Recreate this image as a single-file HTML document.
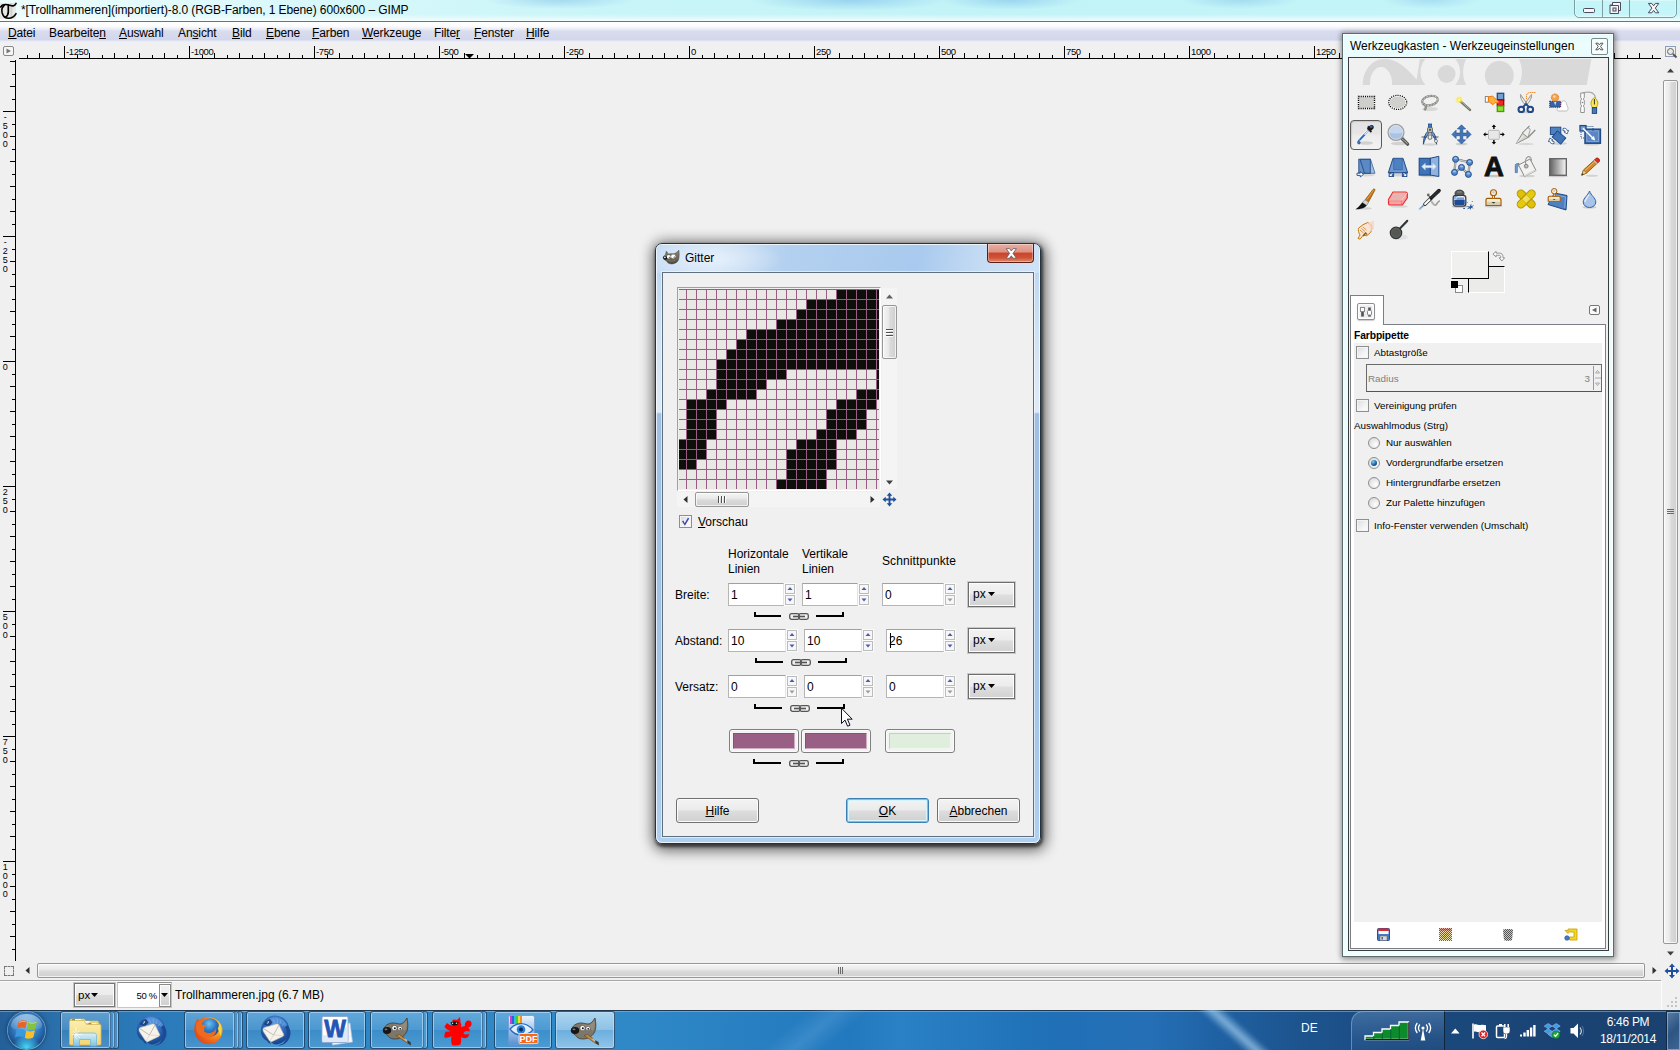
<!DOCTYPE html>
<html lang="de"><head><meta charset="utf-8"><title>GIMP</title>
<style>
html,body{margin:0;padding:0}
body{width:1680px;height:1050px;overflow:hidden;background:#f0f0f0;font-family:"Liberation Sans",sans-serif;font-size:12px;color:#000;position:relative;line-height:14px}
.a{position:absolute}
.t{position:absolute;white-space:nowrap}
u{text-decoration:underline;text-underline-offset:1px}
svg{position:absolute;overflow:visible}
/* title bar */
#title{left:0;top:0;width:1680px;height:21px;background:
 radial-gradient(ellipse 75px 9px at 560px 0px,rgba(125,190,232,.5),rgba(125,190,232,0) 100%),
 radial-gradient(ellipse 100px 11px at 850px 0px,rgba(115,185,232,.55),rgba(115,185,232,0) 100%),
 radial-gradient(ellipse 70px 10px at 1010px 0px,rgba(115,185,232,.5),rgba(115,185,232,0) 100%),
 radial-gradient(ellipse 60px 9px at 1240px 0px,rgba(125,190,232,.45),rgba(125,190,232,0) 100%),
 radial-gradient(ellipse 50px 9px at 1430px 0px,rgba(125,190,232,.4),rgba(125,190,232,0) 100%),
 linear-gradient(90deg,#ecfcfd 0,#dcf8fb 250px,#c9f5f8 600px,#c2f3f7 1000px,#c4f5f9 1680px)}
#title::after{content:"";position:absolute;left:0;right:0;bottom:0;height:7px;background:linear-gradient(180deg,rgba(255,255,255,0),rgba(255,255,255,.75))}
#tline{left:0;top:21px;width:1680px;height:1px;background:#5f7787}
#menu{left:0;top:22px;width:1680px;height:21px;background:linear-gradient(180deg,#fff 0,#fdfdfe 4px,#e4e6f3 8px,#d9dcee 9px,#d3d7eb 18px,#e9ebf5 19px,#f1f2f8 21px)}
#menu span{position:absolute;top:4px;white-space:nowrap;letter-spacing:-.12px}
</style></head><body>
<div class="a" id="title"></div>
<div class="a" style="left:0;top:3px;width:16px;height:16px;background:linear-gradient(90deg,#e6e6e4 0,#e9e9e7 62%,#cfcfcd 68%,#d2d2d0 74%,#e8e8e6 80%,#eaeae8 100%)"></div>
<svg style="left:0;top:3px" width="17" height="17" viewBox="0 0 17 17"><g fill="none" stroke="#000" stroke-linecap="round" transform="translate(.4,0)">
<path d="M4 2.200c-2.300 1.800-3 4.500-2.300 7.500 1 3.700 4 5.800 7.300 5.600 3-.2 5.200-2 6.600-4.600" stroke-width="1.600"/>
<path d="M0.300 3.900c.8-1.600 2.500-2.300 4.500-2.400 3.500-.2 5.500 1.600 8 1.300 1.500-.2 2.300-1.200 2.800-2.300" stroke-width="1.700"/>
<path d="M7.900 2v7c0 2.500-1 4-2.800 5.200" stroke-width="1.700"/>
<path d="M1 2.800l.8-.6M2.500 4.500l1-1" stroke-width=".9"/></g></svg>
<div class="t" id="ttext" style="left:21px;top:3px;font-size:12px;letter-spacing:-0.1px">*[Trollhammeren](importiert)-8.0 (RGB-Farben, 1 Ebene) 600x600 – GIMP</div>
<div class="a" id="tline"></div>
<div class="a" id="menu">
<span style="left:8px"><u>D</u>atei</span><span style="left:49px">Bearbeite<u>n</u></span><span style="left:119px"><u>A</u>uswahl</span><span style="left:178px">An<u>s</u>icht</span><span style="left:232px"><u>B</u>ild</span><span style="left:266px"><u>E</u>bene</span><span style="left:312px"><u>F</u>arben</span><span style="left:362px"><u>W</u>erkzeuge</span><span style="left:434px">Filte<u>r</u></span><span style="left:474px"><u>F</u>enster</span><span style="left:526px"><u>H</u>ilfe</span>
</div>
<div class="a" style="left:1574px;top:-1px;width:103px;height:19px;box-sizing:border-box;border:1px solid #7b9fa3;border-radius:0 0 5px 5px;box-shadow:inset 0 0 0 1px rgba(255,255,255,.35)"></div>
<div class="a" style="left:1602px;top:0;width:1px;height:17px;background:#7b9fa3"></div>
<div class="a" style="left:1629px;top:0;width:1px;height:17px;background:#7b9fa3"></div>
<svg style="left:1574px;top:0" width="103" height="18"><g fill="#f6f6f6" stroke="#4b4b5c" stroke-width="1">
<rect x="9.500" y="8.500" width="11" height="4" rx="1"/>
<path d="M38.500 2.500h8v8h-2v3h-8.500v-8.500h2.500z"/><rect x="39" y="8" width="3" height="3" fill="#cfeff2"/>
<path d="M74.40 3.40h3.40L79.60 5.82L81.40 3.40h3.40L81.30 8.10L84.80 12.80h-3.40L79.60 10.38L77.80 12.80h-3.40L77.90 8.10z"/></g>
<path d="M36.500 5.500h8v7.500" fill="none" stroke="#4b4b5c"/></svg>
<style>.rl{font-size:9px;line-height:10px;letter-spacing:-0.3px}</style>
<svg class="a" style="left:0;top:0" width="1680" height="1050" shape-rendering="crispEdges">
<rect x="19" y="58" width="1642" height="1" fill="#000"/>
<path d="M27 55h1v3h-1zM39 53h1v5h-1zM52 55h1v3h-1zM64 46h1v12h-1zM77 55h1v3h-1zM89 53h1v5h-1zM102 55h1v3h-1zM114 53h1v5h-1zM127 55h1v3h-1zM139 53h1v5h-1zM152 55h1v3h-1zM164 53h1v5h-1zM177 55h1v3h-1zM189 46h1v12h-1zM202 55h1v3h-1zM214 53h1v5h-1zM227 55h1v3h-1zM239 53h1v5h-1zM252 55h1v3h-1zM264 53h1v5h-1zM277 55h1v3h-1zM289 53h1v5h-1zM302 55h1v3h-1zM314 46h1v12h-1zM327 55h1v3h-1zM339 53h1v5h-1zM352 55h1v3h-1zM364 53h1v5h-1zM377 55h1v3h-1zM389 53h1v5h-1zM402 55h1v3h-1zM414 53h1v5h-1zM427 55h1v3h-1zM439 46h1v12h-1zM452 55h1v3h-1zM464 53h1v5h-1zM477 55h1v3h-1zM489 53h1v5h-1zM502 55h1v3h-1zM514 53h1v5h-1zM527 55h1v3h-1zM539 53h1v5h-1zM552 55h1v3h-1zM564 46h1v12h-1zM577 55h1v3h-1zM589 53h1v5h-1zM602 55h1v3h-1zM614 53h1v5h-1zM627 55h1v3h-1zM639 53h1v5h-1zM652 55h1v3h-1zM664 53h1v5h-1zM677 55h1v3h-1zM689 46h1v12h-1zM702 55h1v3h-1zM714 53h1v5h-1zM727 55h1v3h-1zM739 53h1v5h-1zM752 55h1v3h-1zM764 53h1v5h-1zM777 55h1v3h-1zM789 53h1v5h-1zM802 55h1v3h-1zM814 46h1v12h-1zM827 55h1v3h-1zM839 53h1v5h-1zM852 55h1v3h-1zM864 53h1v5h-1zM877 55h1v3h-1zM889 53h1v5h-1zM902 55h1v3h-1zM914 53h1v5h-1zM927 55h1v3h-1zM939 46h1v12h-1zM952 55h1v3h-1zM964 53h1v5h-1zM977 55h1v3h-1zM989 53h1v5h-1zM1002 55h1v3h-1zM1014 53h1v5h-1zM1027 55h1v3h-1zM1039 53h1v5h-1zM1052 55h1v3h-1zM1064 46h1v12h-1zM1077 55h1v3h-1zM1089 53h1v5h-1zM1102 55h1v3h-1zM1114 53h1v5h-1zM1127 55h1v3h-1zM1139 53h1v5h-1zM1152 55h1v3h-1zM1164 53h1v5h-1zM1177 55h1v3h-1zM1189 46h1v12h-1zM1202 55h1v3h-1zM1214 53h1v5h-1zM1227 55h1v3h-1zM1239 53h1v5h-1zM1252 55h1v3h-1zM1264 53h1v5h-1zM1277 55h1v3h-1zM1289 53h1v5h-1zM1302 55h1v3h-1zM1314 46h1v12h-1zM1327 55h1v3h-1zM1339 53h1v5h-1zM1352 55h1v3h-1zM1364 53h1v5h-1zM1377 55h1v3h-1zM1389 53h1v5h-1zM1402 55h1v3h-1zM1414 53h1v5h-1zM1427 55h1v3h-1zM1439 46h1v12h-1zM1452 55h1v3h-1zM1464 53h1v5h-1zM1477 55h1v3h-1zM1489 53h1v5h-1zM1502 55h1v3h-1zM1514 53h1v5h-1zM1527 55h1v3h-1zM1539 53h1v5h-1zM1552 55h1v3h-1zM1564 46h1v12h-1zM1577 55h1v3h-1zM1589 53h1v5h-1zM1602 55h1v3h-1zM1614 53h1v5h-1zM1627 55h1v3h-1zM1639 53h1v5h-1zM1652 55h1v3h-1z" fill="#000"/>
<path d="M465 54h9l-4.5 4.5z" fill="#000" shape-rendering="auto"/>
<rect x="15" y="60" width="1" height="901" fill="#000"/>
<path d="M10 61h5v1h-5zM12 74h3v1h-3zM10 86h5v1h-5zM12 99h3v1h-3zM3 111h12v1h-12zM12 124h3v1h-3zM10 136h5v1h-5zM12 149h3v1h-3zM10 161h5v1h-5zM12 174h3v1h-3zM10 186h5v1h-5zM12 199h3v1h-3zM10 211h5v1h-5zM12 224h3v1h-3zM3 236h12v1h-12zM12 249h3v1h-3zM10 261h5v1h-5zM12 274h3v1h-3zM10 286h5v1h-5zM12 299h3v1h-3zM10 311h5v1h-5zM12 324h3v1h-3zM10 336h5v1h-5zM12 349h3v1h-3zM3 361h12v1h-12zM12 374h3v1h-3zM10 386h5v1h-5zM12 399h3v1h-3zM10 411h5v1h-5zM12 424h3v1h-3zM10 436h5v1h-5zM12 449h3v1h-3zM10 461h5v1h-5zM12 474h3v1h-3zM3 486h12v1h-12zM12 499h3v1h-3zM10 511h5v1h-5zM12 524h3v1h-3zM10 536h5v1h-5zM12 549h3v1h-3zM10 561h5v1h-5zM12 574h3v1h-3zM10 586h5v1h-5zM12 599h3v1h-3zM3 611h12v1h-12zM12 624h3v1h-3zM10 636h5v1h-5zM12 649h3v1h-3zM10 661h5v1h-5zM12 674h3v1h-3zM10 686h5v1h-5zM12 699h3v1h-3zM10 711h5v1h-5zM12 724h3v1h-3zM3 736h12v1h-12zM12 749h3v1h-3zM10 761h5v1h-5zM12 774h3v1h-3zM10 786h5v1h-5zM12 799h3v1h-3zM10 811h5v1h-5zM12 824h3v1h-3zM10 836h5v1h-5zM12 849h3v1h-3zM3 861h12v1h-12zM12 874h3v1h-3zM10 886h5v1h-5zM12 899h3v1h-3zM10 911h5v1h-5zM12 924h3v1h-3zM10 936h5v1h-5zM12 949h3v1h-3z" fill="#000"/>
</svg>
<div class="t rl" style="left:66px;top:46.500px;font-size:9.500px;letter-spacing:-.4px">-1250</div>
<div class="t rl" style="left:191px;top:46.500px;font-size:9.500px;letter-spacing:-.4px">-1000</div>
<div class="t rl" style="left:316px;top:46.500px;font-size:9.500px;letter-spacing:-.4px">-750</div>
<div class="t rl" style="left:441px;top:46.500px;font-size:9.500px;letter-spacing:-.4px">-500</div>
<div class="t rl" style="left:566px;top:46.500px;font-size:9.500px;letter-spacing:-.4px">-250</div>
<div class="t rl" style="left:691px;top:46.500px;font-size:9.500px;letter-spacing:-.4px">0</div>
<div class="t rl" style="left:816px;top:46.500px;font-size:9.500px;letter-spacing:-.4px">250</div>
<div class="t rl" style="left:941px;top:46.500px;font-size:9.500px;letter-spacing:-.4px">500</div>
<div class="t rl" style="left:1066px;top:46.500px;font-size:9.500px;letter-spacing:-.4px">750</div>
<div class="t rl" style="left:1191px;top:46.500px;font-size:9.500px;letter-spacing:-.4px">1000</div>
<div class="t rl" style="left:1316px;top:46.500px;font-size:9.500px;letter-spacing:-.4px">1250</div>
<div class="t rl" style="left:1px;width:8px;text-align:center;top:112px">-</div>
<div class="t rl" style="left:1px;width:8px;text-align:center;top:121px">5</div>
<div class="t rl" style="left:1px;width:8px;text-align:center;top:130px">0</div>
<div class="t rl" style="left:1px;width:8px;text-align:center;top:139px">0</div>
<div class="t rl" style="left:1px;width:8px;text-align:center;top:237px">-</div>
<div class="t rl" style="left:1px;width:8px;text-align:center;top:246px">2</div>
<div class="t rl" style="left:1px;width:8px;text-align:center;top:255px">5</div>
<div class="t rl" style="left:1px;width:8px;text-align:center;top:264px">0</div>
<div class="t rl" style="left:1px;width:8px;text-align:center;top:362px">0</div>
<div class="t rl" style="left:1px;width:8px;text-align:center;top:487px">2</div>
<div class="t rl" style="left:1px;width:8px;text-align:center;top:496px">5</div>
<div class="t rl" style="left:1px;width:8px;text-align:center;top:505px">0</div>
<div class="t rl" style="left:1px;width:8px;text-align:center;top:612px">5</div>
<div class="t rl" style="left:1px;width:8px;text-align:center;top:621px">0</div>
<div class="t rl" style="left:1px;width:8px;text-align:center;top:630px">0</div>
<div class="t rl" style="left:1px;width:8px;text-align:center;top:737px">7</div>
<div class="t rl" style="left:1px;width:8px;text-align:center;top:746px">5</div>
<div class="t rl" style="left:1px;width:8px;text-align:center;top:755px">0</div>
<div class="t rl" style="left:1px;width:8px;text-align:center;top:862px">1</div>
<div class="t rl" style="left:1px;width:8px;text-align:center;top:871px">0</div>
<div class="t rl" style="left:1px;width:8px;text-align:center;top:880px">0</div>
<div class="t rl" style="left:1px;width:8px;text-align:center;top:889px">0</div>
<style>
.thumb{position:absolute;border:1px solid #979797;border-radius:2px;box-sizing:border-box}
.thh{background:linear-gradient(180deg,#f5f5f5 0,#eaeaea 40%,#dadada 55%,#cfcfcf 100%);box-shadow:inset 0 0 0 1px rgba(255,255,255,.7)}
.thv{background:linear-gradient(90deg,#f5f5f5 0,#eaeaea 40%,#dadada 55%,#cfcfcf 100%);box-shadow:inset 0 0 0 1px rgba(255,255,255,.7)}
.gbtn{position:absolute;box-sizing:border-box;border:1px solid #8e8f8f;box-shadow:inset 0 0 0 1px #fcfcfc;background:linear-gradient(180deg,#f2f2f2 0,#ebebeb 48%,#dddddd 52%,#cfcfcf 100%)}
</style>
<!-- vertical scrollbar -->
<div class="a" style="left:1663px;top:61px;width:15px;height:900px;background:#efefef"></div>
<div class="thumb thv" style="left:1663px;top:80px;width:15px;height:864px"></div>
<svg style="left:1663px;top:61px" width="15" height="900"><path d="M4 11.5l3.5-4 3.5 4z" fill="#404040"/><path d="M4 890.5l3.5 4 3.5-4z" fill="#404040"/>
<path d="M4 448.5h7M4 450.5h7M4 452.5h7" stroke="#6a6a6a" stroke-width="1" transform="translate(0,0)"/></svg>
<!-- horizontal scrollbar -->
<div class="a" style="left:19px;top:963px;width:1642px;height:15px;background:#efefef"></div>
<div class="thumb thh" style="left:37px;top:963px;width:1608px;height:15px"></div>
<svg style="left:19px;top:963px" width="1642" height="15"><path d="M10.5 4l-4 3.5 4 3.5z" fill="#303030"/><path d="M1633.5 4l4 3.5-4 3.5z" fill="#303030"/>
<path d="M819.5 4v7M821.5 4v7M823.5 4v7" stroke="#6a6a6a" stroke-width="1"/></svg>
<!-- quick mask -->
<div class="a" style="left:4px;top:966px;width:8px;height:8px;border:1px dashed #777"></div>
<!-- nav icon bottom right -->
<svg style="left:1664px;top:963px" width="16" height="16" viewBox="0 0 16 16"><path d="M8 0.5l3 3.5h-2v3h3v-2l3.5 3-3.5 3v-2h-3v3h2l-3 3.5-3-3.500h2v-3h-3v2l-3.500-3 3.500-3v2h3v-3h-2z" fill="#1f4f9c"/></svg>
<!-- zoom icon top right -->
<svg style="left:1665px;top:46px" width="13" height="13" viewBox="0 0 13 13"><rect x="0.500" y="0.500" width="10" height="10" fill="none" stroke="#2a4a8a" stroke-dasharray="1 1"/><circle cx="5.500" cy="5.500" r="3" fill="#e8e8e8" stroke="#666"/><path d="M8 8l3.500 3.500" stroke="#555" stroke-width="2"/></svg>
<!-- top-left ruler button -->
<div class="a" style="left:3px;top:46px;width:9px;height:8px;border:1px solid #888;border-radius:2px;background:#f6f6f6"></div>
<svg style="left:3px;top:46px" width="11" height="10"><path d="M3.500 2.500l4.500 2.500-4.500 2.500z" fill="#777"/></svg>
<!-- status bar -->
<div class="a" style="left:0;top:980px;width:1661px;height:1px;background:#a5a5a5"></div>
<div class="a" style="left:0;top:981px;width:1661px;height:1px;background:#fbfbfb"></div>
<div class="a" style="left:1661px;top:981px;width:1px;height:29px;background:#fbfbfb"></div>
<div class="gbtn" style="left:74px;top:983px;width:41px;height:24px;border-color:#757575;box-shadow:0 0 0 1px #c6c6c6,inset 0 0 0 1px #fcfcfc"></div>
<div class="t" style="left:78px;top:988px;font-size:11.500px">px</div>
<svg style="left:91px;top:993px" width="8" height="5"><path d="M0 0h7l-3.500 4z" fill="#000"/></svg>
<div class="a" style="left:117px;top:982px;width:55px;height:26px;box-sizing:border-box;border:1px solid #c6c6c6;border-top:1px solid #8e8e8e;background:#fff"></div>
<div class="gbtn" style="left:159px;top:984px;width:12px;height:23px;border-color:#8a8a8a"></div>
<svg style="left:161px;top:993px" width="8" height="5"><path d="M0 0h7l-3.500 4z" fill="#000"/></svg>
<div class="t" style="left:117px;width:40px;text-align:right;top:989px;font-size:9.500px;letter-spacing:-.3px">50 %</div>
<div class="t" style="left:175px;top:988px">Trollhammeren.jpg (6.7 MB)</div>
<!-- resize grip -->
<svg style="left:1667px;top:997px" width="12" height="12"><g fill="#c4c4c4"><rect x="8" y="0" width="2" height="2"/><rect x="4" y="4" width="2" height="2"/><rect x="8" y="4" width="2" height="2"/><rect x="0" y="8" width="2" height="2"/><rect x="4" y="8" width="2" height="2"/><rect x="8" y="8" width="2" height="2"/></g></svg>
<style>
#dlg{left:655px;top:243px;width:386px;height:601px;box-sizing:border-box;border:1px solid #27323f;border-radius:7px;
 box-shadow:0 0 0 0 #000,1px 2px 3px 1px rgba(0,0,0,.55),2px 4px 14px 3px rgba(0,0,0,.45),0 0 14px 2px rgba(0,0,0,.25);
 background:linear-gradient(180deg,#b4d1f0 0,#bfd8f2 30px,#d2e3f5 100px,#deeaf8 168px,#9fc0e4 170px,#a2c4e8 450px,#b0d0f2 600px)}
#dlg::before{content:"";position:absolute;left:0;top:0;right:0;bottom:0;border-radius:6px;box-shadow:inset 0 0 0 1px rgba(255,255,255,.75)}
#dtitle{left:1px;top:1px;width:382px;height:28px;border-radius:6px 6px 0 0;background:
 radial-gradient(ellipse 70px 22px at 55px 14px,rgba(232,242,252,.9),rgba(232,242,252,0) 100%),
 linear-gradient(100deg,#c6dcf3 0,#cfe1f5 60px,#b3d0ef 130px,#a9caee 260px,#c8ddf4 330px,#d0e2f6 384px)}
#dcl{left:6px;top:28px;width:372px;height:565px;box-sizing:border-box;border:1px solid #5e6f80;background:#f0f0f0;box-shadow:0 0 0 1px rgba(255,255,255,.55)}
#dx{left:331px;top:0px;width:47px;height:19px;box-sizing:border-box;border:1px solid #5a1f18;border-top:none;border-radius:0 0 4px 4px;box-shadow:inset 0 0 0 1px rgba(255,255,255,.35);
 background:linear-gradient(180deg,#e9aea2 0,#dd9284 45%,#c9442c 50%,#cf5236 75%,#e08a6a 100%)}
</style>
<div class="a" id="dlg">
<div class="a" id="dtitle"></div>
<div class="a" id="dx"></div>
<svg style="left:349px;top:4px" width="12" height="10" viewBox="0 0 12 10"><path d="M1.20 0.60h3.40L6.30 3.00L8.00 0.60h3.40L8.00 5.40L11.40 10.20h-3.40L6.30 7.80L4.60 10.20h-3.40L4.60 5.40z" fill="#fff" stroke="#5a5a66" stroke-width=".8"/></svg>
<svg style="left:7px;top:6px" width="17" height="15" viewBox="0 0 17 15"><defs><linearGradient id="wh" x1="0" y1="0" x2="0" y2="1"><stop offset="0" stop-color="#8a857a"/><stop offset=".6" stop-color="#6d675b"/><stop offset="1" stop-color="#4a463e"/></linearGradient></defs>
<path d="M3.300 1.300c.8 1 1.500 2.200 2.500 2.800 1.500-.5 3.500-.6 5.200-.3 1.800-.6 3.500-2 4.800-3.600.5 3 .5 6.500-.3 9.500-.8 2.500-3.500 4-6.500 4.200-3 .1-5-1.200-5.700-3.300-1.500-.3-2.800-1.300-3-2.800-.1-1.400.8-2.500 2.300-2.900.2-1.300.3-2.500.7-3.600z" fill="url(#wh)" stroke="#3a362f" stroke-width=".5"/>
<ellipse cx="2.300" cy="7.800" rx="2.100" ry="1.900" fill="#151515"/><ellipse cx="1.900" cy="7.400" rx=".9" ry=".8" fill="#e8e8e8"/>
<ellipse cx="5.700" cy="6.700" rx="1.900" ry="1.700" fill="#fff"/><ellipse cx="10.300" cy="6.500" rx="2.200" ry="1.900" fill="#fff"/>
<path d="M5.600 7.700l1-1.300.3 1.400z M10.300 7.500l1.200-1.300.2 1.500z" fill="#111"/>
<path d="M5.500 10.500c2 .8 4.500.8 6.500-.2" fill="none" stroke="#8f897b" stroke-width=".6"/></svg>
<div class="t" style="left:29px;top:7px">Gitter</div>
<div class="a" id="dcl"></div>
</div>
<svg class="a" style="left:679px;top:289px" width="200" height="200" shape-rendering="crispEdges">
<rect width="200" height="200" fill="#e8e9e5"/>
<path d="M157 0h43v10h-43zM127 10h73v10h-73zM117 20h83v10h-83zM97 30h103v10h-103zM67 40h133v10h-133zM57 50h143v10h-143zM47 60h153v10h-153zM37 70h163v10h-163zM37 80h70v10h-70zM197 80h3v10h-3zM37 90h50v10h-50zM197 90h3v10h-3zM27 100h50v10h-50zM177 100h23v10h-23zM7 110h40v10h-40zM157 110h40v10h-40zM7 120h30v10h-30zM147 120h40v10h-40zM7 130h30v10h-30zM147 130h40v10h-40zM7 140h30v10h-30zM137 140h40v10h-40zM0 150h27v10h-27zM117 150h40v10h-40zM0 160h27v10h-27zM107 160h50v10h-50zM0 170h17v10h-17zM107 170h50v10h-50zM107 180h40v10h-40zM97 190h50v10h-50z" fill="#0d0f0b"/>
<path d="M7 0h1v200h-1zM0 0h200v1h-200zM17 0h1v200h-1zM0 10h200v1h-200zM27 0h1v200h-1zM0 20h200v1h-200zM37 0h1v200h-1zM0 30h200v1h-200zM47 0h1v200h-1zM0 40h200v1h-200zM57 0h1v200h-1zM0 50h200v1h-200zM67 0h1v200h-1zM0 60h200v1h-200zM77 0h1v200h-1zM0 70h200v1h-200zM87 0h1v200h-1zM0 80h200v1h-200zM97 0h1v200h-1zM0 90h200v1h-200zM107 0h1v200h-1zM0 100h200v1h-200zM117 0h1v200h-1zM0 110h200v1h-200zM127 0h1v200h-1zM0 120h200v1h-200zM137 0h1v200h-1zM0 130h200v1h-200zM147 0h1v200h-1zM0 140h200v1h-200zM157 0h1v200h-1zM0 150h200v1h-200zM167 0h1v200h-1zM0 160h200v1h-200zM177 0h1v200h-1zM0 170h200v1h-200zM187 0h1v200h-1zM0 180h200v1h-200zM197 0h1v200h-1zM0 190h200v1h-200z" fill="#9b5b85"/>
</svg>
<style>
.ent{position:absolute;box-sizing:border-box;height:23px;background:#fff;border:1px solid #b5b5b5;border-top-color:#a0a0a0;border-right-color:#e4e4e4}
.spb{position:absolute;box-sizing:border-box;width:10px;height:10px;border:1px solid #bcbcbc;background:#f7f7f7}
.spw{position:absolute;background:#fbfbfb}
.pxb{position:absolute;box-sizing:border-box;width:47px;height:25px;border:1px solid #6e6e6e;box-shadow:0 0 0 1px #c9c9c9,inset 0 0 0 1px #fdfdfd;background:linear-gradient(180deg,#f3f3f3 0,#ececec 48%,#dedede 52%,#d2d2d2 100%)}
.btn{position:absolute;box-sizing:border-box;height:25px;border:1px solid #707070;border-radius:3px;box-shadow:inset 0 0 0 1px #fcfcfc;background:linear-gradient(180deg,#f3f3f3 0,#ebebeb 48%,#dddddd 52%,#d0d0d0 100%);text-align:center;line-height:24px}
.cbtn{position:absolute;box-sizing:border-box;width:70px;height:24px;border:1px solid #808080;border-radius:3px;background:#f3f3f3;box-shadow:inset 0 0 0 1px #fbfbfb}
.cbtn i{position:absolute;left:3px;top:3px;right:3px;bottom:3px;box-shadow:inset 1px 1px 0 rgba(0,0,0,.12), inset -1px -1px 0 rgba(255,255,255,.5)}
</style>
<div class="a" style="left:677px;top:287px;width:204px;height:204px;box-sizing:border-box;border:1px solid #fff;border-top-color:#a0a0a0;border-left-color:#a0a0a0"></div>
<div class="a" style="left:882px;top:288px;width:15px;height:201px;background:#f4f4f4"></div>
<div class="thumb thv" style="left:882px;top:305px;width:15px;height:54px"></div>
<svg style="left:882px;top:288px" width="15" height="201"><path d="M4 10.500l3.500-4 3.500 4z" fill="#606060"/><path d="M4 192.500l3.500 4 3.500-4z" fill="#404040"/><path d="M4 42.500h7M4 45.500h7M4 48.500h7" stroke="#fff" stroke-width="1"/><path d="M4 41.500h7M4 44.500h7M4 47.500h7" stroke="#505050" stroke-width="1"/></svg>
<div class="a" style="left:677px;top:492px;width:203px;height:15px;background:#f4f4f4"></div>
<div class="thumb thh" style="left:695px;top:492px;width:54px;height:15px"></div>
<svg style="left:677px;top:492px" width="203" height="15"><path d="M10.500 4l-4 3.500 4 3.500z" fill="#303030"/><path d="M193.500 4l4 3.500-4 3.500z" fill="#303030"/><path d="M42.500 4v7M45.500 4v7M48.500 4v7" stroke="#fff" stroke-width="1"/><path d="M41.500 4v7M44.500 4v7M47.500 4v7" stroke="#505050" stroke-width="1"/></svg>
<svg style="left:882px;top:492px" width="15" height="15" viewBox="0 0 16 16"><path d="M8 0.500l3 3.500h-2v3h3v-2l3.500 3-3.500 3v-2h-3v3h2l-3 3.500-3-3.500h2v-3h-3v2l-3.500-3 3.500-3v2h3v-3h-2z" fill="#1f4f9c"/></svg>
<div class="a" style="left:679px;top:515px;width:13px;height:13px;box-sizing:border-box;border:1px solid #8e8f8f;background:linear-gradient(135deg,#d4d7dc 0,#f4f4f4 60%,#fff 100%);box-shadow:inset 0 0 0 1px #f4f4f4"></div>
<svg style="left:679px;top:515px" width="13" height="13"><path d="M3 6.200l1.300-.6 1.400 2.600 3.200-5.400 1.300.7-4.300 7.200z" fill="#3a44a8"/></svg>
<div class="t" style="left:698px;top:515px"><u>V</u>orschau</div>
<div class="t" style="left:728px;top:547px;line-height:15px">Horizontale<br>Linien</div>
<div class="t" style="left:802px;top:547px;line-height:15px">Vertikale<br>Linien</div>
<div class="t" style="left:882px;top:554px;letter-spacing:.1px">Schnittpunkte</div>
<div class="t" style="left:675px;top:588px">Breite:</div>
<div class="spw" style="left:784px;top:583px;width:12px;height:23px"></div>
<div class="ent" style="left:728px;top:583px;width:56px"></div>
<div class="t" style="left:731px;top:588px">1</div>
<div class="spb" style="left:785px;top:584px"></div><div class="spb" style="left:785px;top:595px"></div>
<svg style="left:785px;top:584px" width="10" height="21"><path d="M2.500 6l2.500-3 2.500 3z" fill="#4a5cb4"/><path d="M2.500 14.500l2.500 3 2.500-3z" fill="#4a5cb4"/></svg>
<div class="spw" style="left:858px;top:583px;width:12px;height:23px"></div>
<div class="ent" style="left:802px;top:583px;width:56px"></div>
<div class="t" style="left:805px;top:588px">1</div>
<div class="spb" style="left:859px;top:584px"></div><div class="spb" style="left:859px;top:595px"></div>
<svg style="left:859px;top:584px" width="10" height="21"><path d="M2.500 6l2.500-3 2.500 3z" fill="#4a5cb4"/><path d="M2.500 14.500l2.500 3 2.500-3z" fill="#4a5cb4"/></svg>
<div class="spw" style="left:944px;top:583px;width:12px;height:23px"></div>
<div class="ent" style="left:882px;top:583px;width:62px"></div>
<div class="t" style="left:885px;top:588px">0</div>
<div class="spb" style="left:945px;top:584px"></div><div class="spb" style="left:945px;top:595px"></div>
<svg style="left:945px;top:584px" width="10" height="21"><path d="M2.500 6l2.500-3 2.500 3z" fill="#4a5cb4"/><path d="M2.500 14.500l2.500 3 2.500-3z" fill="#9a9a9a"/></svg>
<div class="pxb" style="left:968px;top:582px"></div><div class="t" style="left:973px;top:587px">px</div>
<svg style="left:988px;top:592px" width="8" height="5"><path d="M0 0h7l-3.500 4z" fill="#000"/></svg>
<svg style="left:0;top:0" width="1680" height="1050"><path d="M754 612h2v3h25v2h-27z M844 612h-2v3h-26v2h28z" fill="#000" shape-rendering="crispEdges"/><g transform="translate(789,613)" fill="none" stroke="#555" stroke-width="1.300"><rect x="0.700" y="0.700" width="9.500" height="5.600" rx="1.800"/><rect x="9.800" y="0.700" width="9.500" height="5.600" rx="1.800"/><path d="M4 3.500h12" stroke-width="1.600"/></g></svg>
<div class="t" style="left:675px;top:634px">Abstand:</div>
<div class="spw" style="left:786px;top:629px;width:12px;height:23px"></div>
<div class="ent" style="left:728px;top:629px;width:58px"></div>
<div class="t" style="left:731px;top:634px">10</div>
<div class="spb" style="left:787px;top:630px"></div><div class="spb" style="left:787px;top:641px"></div>
<svg style="left:787px;top:630px" width="10" height="21"><path d="M2.500 6l2.500-3 2.500 3z" fill="#4a5cb4"/><path d="M2.500 14.500l2.500 3 2.500-3z" fill="#4a5cb4"/></svg>
<div class="spw" style="left:862px;top:629px;width:12px;height:23px"></div>
<div class="ent" style="left:804px;top:629px;width:58px"></div>
<div class="t" style="left:807px;top:634px">10</div>
<div class="spb" style="left:863px;top:630px"></div><div class="spb" style="left:863px;top:641px"></div>
<svg style="left:863px;top:630px" width="10" height="21"><path d="M2.500 6l2.500-3 2.500 3z" fill="#4a5cb4"/><path d="M2.500 14.500l2.500 3 2.500-3z" fill="#4a5cb4"/></svg>
<div class="spw" style="left:944px;top:629px;width:12px;height:23px"></div>
<div class="ent" style="left:886px;top:629px;width:58px"></div>
<div class="t" style="left:889px;top:634px">26</div>
<div class="spb" style="left:945px;top:630px"></div><div class="spb" style="left:945px;top:641px"></div>
<svg style="left:945px;top:630px" width="10" height="21"><path d="M2.500 6l2.500-3 2.500 3z" fill="#4a5cb4"/><path d="M2.500 14.500l2.500 3 2.500-3z" fill="#4a5cb4"/></svg>
<div class="pxb" style="left:968px;top:628px"></div><div class="t" style="left:973px;top:633px">px</div>
<svg style="left:988px;top:638px" width="8" height="5"><path d="M0 0h7l-3.500 4z" fill="#000"/></svg>
<svg style="left:0;top:0" width="1680" height="1050"><path d="M755 658h2v3h26v2h-28z M847 658h-2v3h-27v2h29z" fill="#000" shape-rendering="crispEdges"/><g transform="translate(791,659)" fill="none" stroke="#555" stroke-width="1.300"><rect x="0.700" y="0.700" width="9.500" height="5.600" rx="1.800"/><rect x="9.800" y="0.700" width="9.500" height="5.600" rx="1.800"/><path d="M4 3.500h12" stroke-width="1.600"/></g></svg>
<div class="t" style="left:675px;top:680px">Versatz:</div>
<div class="spw" style="left:786px;top:675px;width:12px;height:23px"></div>
<div class="ent" style="left:728px;top:675px;width:58px"></div>
<div class="t" style="left:731px;top:680px">0</div>
<div class="spb" style="left:787px;top:676px"></div><div class="spb" style="left:787px;top:687px"></div>
<svg style="left:787px;top:676px" width="10" height="21"><path d="M2.500 6l2.500-3 2.500 3z" fill="#4a5cb4"/><path d="M2.500 14.500l2.500 3 2.500-3z" fill="#9a9a9a"/></svg>
<div class="spw" style="left:862px;top:675px;width:12px;height:23px"></div>
<div class="ent" style="left:804px;top:675px;width:58px"></div>
<div class="t" style="left:807px;top:680px">0</div>
<div class="spb" style="left:863px;top:676px"></div><div class="spb" style="left:863px;top:687px"></div>
<svg style="left:863px;top:676px" width="10" height="21"><path d="M2.500 6l2.500-3 2.500 3z" fill="#4a5cb4"/><path d="M2.500 14.500l2.500 3 2.500-3z" fill="#9a9a9a"/></svg>
<div class="spw" style="left:944px;top:675px;width:12px;height:23px"></div>
<div class="ent" style="left:886px;top:675px;width:58px"></div>
<div class="t" style="left:889px;top:680px">0</div>
<div class="spb" style="left:945px;top:676px"></div><div class="spb" style="left:945px;top:687px"></div>
<svg style="left:945px;top:676px" width="10" height="21"><path d="M2.500 6l2.500-3 2.500 3z" fill="#4a5cb4"/><path d="M2.500 14.500l2.500 3 2.500-3z" fill="#9a9a9a"/></svg>
<div class="pxb" style="left:968px;top:674px"></div><div class="t" style="left:973px;top:679px">px</div>
<svg style="left:988px;top:684px" width="8" height="5"><path d="M0 0h7l-3.500 4z" fill="#000"/></svg>
<svg style="left:0;top:0" width="1680" height="1050"><path d="M754 704h2v3h26v2h-28z M845 704h-2v3h-26v2h28z" fill="#000" shape-rendering="crispEdges"/><g transform="translate(790,705)" fill="none" stroke="#555" stroke-width="1.300"><rect x="0.700" y="0.700" width="9.500" height="5.600" rx="1.800"/><rect x="9.800" y="0.700" width="9.500" height="5.600" rx="1.800"/><path d="M4 3.500h12" stroke-width="1.600"/></g></svg>
<div class="a" style="left:890px;top:633px;width:1px;height:15px;background:#000"></div>
<div class="cbtn" style="left:729px;top:729px"><i style="background:#9a5f85"></i></div>
<div class="cbtn" style="left:801px;top:729px"><i style="background:#9a5f85"></i></div>
<div class="cbtn" style="left:885px;top:729px"><i style="background:#dfeedd"></i></div>
<svg style="left:0;top:0" width="1680" height="1050"><path d="M753 759h2v3h26v2h-28z M844 759h-2v3h-26v2h28z" fill="#000" shape-rendering="crispEdges"/><g transform="translate(789,760)" fill="none" stroke="#555" stroke-width="1.300"><rect x="0.700" y="0.700" width="9.500" height="5.600" rx="1.800"/><rect x="9.800" y="0.700" width="9.500" height="5.600" rx="1.800"/><path d="M4 3.500h12" stroke-width="1.600"/></g></svg>
<div class="btn" style="left:676px;top:798px;width:83px"><u>H</u>ilfe</div>
<div class="btn" style="left:846px;top:798px;width:83px;border-color:#3c7fb1;box-shadow:inset 0 0 0 1px #46d8fb,inset 0 0 0 2px #d8f4fc"><u>O</u>K</div>
<div class="btn" style="left:937px;top:798px;width:83px"><u>A</u>bbrechen</div>
<svg style="left:840px;top:707px" width="14" height="22" viewBox="0 0 14 22"><path d="M1.500 1.200v15.300l3.500-3.400 2.600 6.100 2.400-1-2.600-6h4.800z" fill="#fff" stroke="#0a0f24" stroke-width="1" stroke-linejoin="miter"/></svg>
<style>
#tbx{left:1342px;top:33px;width:272px;height:924px;box-sizing:border-box;border:1px solid #5d6b6c;background:linear-gradient(180deg,#e3fbfc 0,#edfdfd 10px,#e9fbfd 24px,#eefdfe 100%);box-shadow:inset 0 0 0 1px #fbffff,0 0 5px 1px rgba(0,0,0,.28),1px 2px 6px 1px rgba(0,0,0,.22)}
#tbc{left:1348px;top:57px;width:261px;height:894px;box-sizing:border-box;border:1px solid #3c3c3c;background:#f0f0f0}
#nb{left:1350px;top:324px;width:256px;height:625px;box-sizing:border-box;border:1px solid #7a7f87;background:#fff}
#nbtab{left:1350px;top:295px;width:34px;height:30px;box-sizing:border-box;border:1px solid #7a7f87;border-bottom:none;background:#fff}
#nbin{left:1354px;top:343px;width:248px;height:579px;background:#f0f0f0}
.sm{font-size:9.85px;line-height:12px}
.cb{position:absolute;box-sizing:border-box;width:13px;height:13px;border:1px solid #8e8f8f;background:linear-gradient(135deg,#d9dbdf 0,#f2f2f2 55%,#fefefe 100%);box-shadow:inset 0 0 0 1px #f4f4f4}
.rb{position:absolute;box-sizing:border-box;width:12px;height:12px;border:1px solid #8e8f8f;border-radius:50%;background:radial-gradient(circle at 65% 65%,#fefefe 0,#e9e9e9 50%,#cfd2d6 100%)}
</style>
<div class="a" id="tbx"></div>
<div class="t" style="left:1350px;top:39px">Werkzeugkasten - Werkzeugeinstellungen</div>
<div class="a" style="left:1591px;top:38px;width:17px;height:17px;box-sizing:border-box;border:1px solid #7c8a8c;border-radius:2px;background:#f4fefe"></div>
<svg style="left:1595px;top:42px" width="9" height="9" viewBox="0 0 9 9"><path d="M0.80 1.20h2.30L4.40 2.95L5.70 1.20h2.30L5.55 4.50L8.00 7.80h-2.30L4.40 6.05L3.10 7.80h-2.30L3.25 4.50z" fill="#fff" stroke="#444" stroke-width=".9"/></svg>
<div class="a" id="tbc"></div>
<!-- FG/BG -->
<div class="a" style="left:1468px;top:266px;width:37px;height:27px;box-sizing:border-box;background:#ebece9;border:1px solid #fff;border-top-color:#000;border-left-color:#000"></div>
<div class="a" style="left:1451px;top:251px;width:38px;height:28px;box-sizing:border-box;background:#f0f1ef;border:1px solid #000;border-top-color:#fff;border-left-color:#fff"></div>
<div class="a" style="left:1455px;top:285px;width:8px;height:8px;box-sizing:border-box;border:1px solid #8a8a8a;background:#fff"></div>
<div class="a" style="left:1451px;top:281px;width:7px;height:7px;background:#000"></div>
<svg style="left:1492px;top:250px" width="14" height="14" viewBox="0 0 14 14"><path d="M4.500 1.500l-3.500 3 3.500 3v-1.800h3.300c1 0 1.700.7 1.700 1.700v1.100h-1.800l3 3.500 3-3.500h-1.800v-1.400c0-2.200-1.500-3.700-3.700-3.700h-3.700z" fill="#fafafa" stroke="#8a8a8a" stroke-width="1" transform="scale(.92) translate(0,0)"/></svg>
<!-- notebook -->
<div class="a" id="nb"></div>
<div class="a" id="nbtab"></div>
<div class="a" id="nbin"></div>
<div class="a" style="left:1357px;top:303px;width:18px;height:17px;box-sizing:border-box;border:1px solid #8e8e8e;border-radius:2px;background:#fdfdfd;box-shadow:0 1px 1px rgba(0,0,0,.2)"></div>
<svg style="left:1357px;top:303px" width="18" height="17"><rect x="2.500" y="2.500" width="13" height="12" fill="#ececec"/><rect x="4.200" y="8.600" width="2.600" height="5" fill="#4a5358"/><rect x="3.500" y="4.500" width="4" height="4" fill="#fff" stroke="#8a8a8a"/><rect x="11.200" y="4.500" width="2.600" height="9.100" fill="#4a5358"/><rect x="10.500" y="7.500" width="4" height="4.500" rx=".8" fill="#fff" stroke="#8a8a8a"/></svg>
<div class="a" style="left:1589px;top:305px;width:11px;height:10px;box-sizing:border-box;border:1px solid #777;border-radius:2px;background:#fafafa"></div>
<svg style="left:1589px;top:305px" width="11" height="10"><path d="M7.500 2.500l-4.500 2.500 4.500 2.500z" fill="#666"/></svg>
<div class="t" style="left:1354px;top:329px;font-weight:bold;font-size:10.300px;letter-spacing:-.1px">Farbpipette</div>
<div class="cb" style="left:1356px;top:346px"></div><div class="t sm" style="left:1374px;top:347px">Abtastgröße</div>
<div class="a" style="left:1366px;top:364px;width:236px;height:28px;box-sizing:border-box;border:1px solid #6a6a6a;border-bottom-color:#555;background:#f0f0f0"></div>
<div class="t sm" style="left:1368px;top:373px;color:#808080">Radius</div>
<div class="t sm" style="left:1560px;width:30px;text-align:right;top:373px;color:#808080">3</div>
<svg style="left:1592px;top:365px" width="10" height="26"><path d="M1.500 1v24" stroke="#999"/><path d="M3.500 8l2-2.500 2 2.500z M3.500 18l2 2.500 2-2.500z" fill="none" stroke="#999" stroke-width=".8"/><path d="M3 13h6" stroke="#aaa"/></svg>
<div class="cb" style="left:1356px;top:399px"></div><div class="t sm" style="left:1374px;top:400px">Vereinigung prüfen</div>
<div class="t sm" style="left:1354px;top:420px">Auswahlmodus (Strg)</div>
<div class="rb" style="left:1368px;top:437px"></div><div class="t sm" style="left:1386px;top:437px">Nur auswählen</div>
<div class="rb" style="left:1368px;top:457px"></div><div class="a" style="left:1371px;top:460px;width:6px;height:6px;border-radius:50%;background:radial-gradient(circle at 35% 30%,#7fd0f0 0,#1b5fa8 55%,#0d2f5c 100%)"></div><div class="t sm" style="left:1386px;top:457px">Vordergrundfarbe ersetzen</div>
<div class="rb" style="left:1368px;top:477px"></div><div class="t sm" style="left:1386px;top:477px">Hintergrundfarbe ersetzen</div>
<div class="rb" style="left:1368px;top:497px"></div><div class="t sm" style="left:1386px;top:497px">Zur Palette hinzufügen</div>
<div class="cb" style="left:1356px;top:519px"></div><div class="t sm" style="left:1374px;top:520px">Info-Fenster verwenden (Umschalt)</div>
<svg style="left:1348px;top:56px;overflow:hidden" width="262" height="30" viewBox="0 0 262 30"><defs><clipPath id="wmc"><rect x="0" y="3" width="262" height="26"/></clipPath></defs><g clip-path="url(#wmc)"><path d="M14.800 29C14.800 14 24 3 37 3c13 0 22 10 31.600 20.400L71.800 3H243.400L238.700 29z" fill="#d9d9d9"/><ellipse cx="33" cy="27" rx="11" ry="16" fill="#f0f0f0"/><circle cx="92.300" cy="16" r="19.800" fill="#f0f0f0"/><circle cx="144.500" cy="16" r="29.500" fill="#f0f0f0"/><circle cx="98.600" cy="18" r="9" fill="#d9d9d9"/><circle cx="151.300" cy="19.500" r="14.400" fill="#d9d9d9"/></g></svg>
<div class="a" style="left:1350px;top:120px;width:32px;height:30px;box-sizing:border-box;border:1px solid #5a5a5a;border-radius:4px;background:linear-gradient(180deg,#e2e2e2 0,#e6e6e6 45%,#ededed 55%,#f2f2f2 100%);box-shadow:inset 1px 1px 1px rgba(0,0,0,.12)"></div>
<svg style="left:1354px;top:90px" width="24" height="24" viewBox="0 0 24 24"><rect x="4.700" y="6.700" width="15.600" height="11.600" fill="#cdcfcb" stroke="#fff" stroke-width="1"/><rect x="4.500" y="6.500" width="16" height="12" fill="none" stroke="#000" stroke-width="1.400" stroke-dasharray="1.100 1.050"/></svg>
<svg style="left:1386px;top:90px" width="24" height="24" viewBox="0 0 24 24"><ellipse cx="11.700" cy="12.400" rx="8.700" ry="6.800" fill="#cfd1cd" stroke="#fff" stroke-width="1.600"/><ellipse cx="11.700" cy="12.400" rx="9" ry="7" fill="none" stroke="#000" stroke-width="1.300" stroke-dasharray="1.100 1.100"/></svg>
<svg style="left:1418px;top:90px" width="24" height="24" viewBox="0 0 24 24"><ellipse cx="12" cy="19" rx="8" ry="2" fill="rgba(0,0,0,.1)"/><g fill="none" stroke="#8b8c86" stroke-width="2.200"><ellipse cx="12" cy="10.600" rx="8" ry="4.600" transform="rotate(-12 12 10.600)"/><path d="M5.500 13.500c1.500 1.500 3 2.500 2.300 4.500c-.4 1-1 1.500-1.300 2.300"/></g><g fill="none" stroke="#e6e6e2" stroke-width=".8"><ellipse cx="12" cy="10.600" rx="8" ry="4.600" transform="rotate(-12 12 10.600)" stroke-dasharray="1.500 1.500"/></g></svg>
<svg style="left:1450px;top:90px" width="24" height="24" viewBox="0 0 24 24"><defs><radialGradient id="wg"><stop offset="0" stop-color="#fff"/><stop offset=".35" stop-color="#fce94f"/><stop offset="1" stop-color="#fce94f" stop-opacity="0"/></radialGradient></defs><path d="M10.500 11.300l9.500 8.600" stroke="#6e7360" stroke-width="2.400" stroke-linecap="round"/><path d="M10.800 11.200l9 8.200" stroke="#b5b9a6" stroke-width=".8"/><circle cx="9.100" cy="9.900" r="4.200" fill="url(#wg)"/></svg>
<svg style="left:1482px;top:90px" width="24" height="24" viewBox="0 0 24 24"><rect x="15.300" y="3.300" width="6.400" height="6.400" fill="#729fcf" stroke="#204a87" stroke-width="1.300"/><rect x="15.300" y="9.900" width="6.400" height="5.600" fill="#ef2929" stroke="#a40000" stroke-width="1.300"/><rect x="15.300" y="15.900" width="6.400" height="5.600" fill="#8ae234" stroke="#4e9a06" stroke-width="1.300"/><rect x="3.300" y="6.600" width="3" height="5.600" fill="#fff" stroke="#777" stroke-width=".9"/><path d="M6.500 6.700l4.200-.5 5.800 5.300-1 1.600-2.300-.6-2.200 2.200-4.500-3.300z" fill="#fcaf3e" stroke="#f57900" stroke-width="1"/></svg>
<svg style="left:1514px;top:90px" width="24" height="24" viewBox="0 0 24 24"><ellipse cx="12" cy="22" rx="8" ry="1.300" fill="rgba(0,0,0,.15)"/><path d="M12.500 9c-.3-3 0-5.500 2-6.200 2.500-.5 5-.3 7.500-.3" fill="none" stroke="#f57900" stroke-width="1" stroke-dasharray="1.200 .8"/><path d="M6.500 4.500c-.5 3 1.500 7 5 10.500l2-1c-2.500-3-5-6.500-7-9.500z M17.500 4.500c.5 3-1.500 7-5 10.500l-2-1c2.500-3 5-6.500 7-9.500z" fill="#eeeeec" stroke="#888a85" stroke-width=".9"/><g fill="none" stroke="#204a87" stroke-width="2"><ellipse cx="7.300" cy="19.400" rx="2.800" ry="2.600"/><ellipse cx="16.300" cy="19.400" rx="2.800" ry="2.600"/></g><path d="M9 17l3-3 3 3" fill="none" stroke="#204a87" stroke-width="1.800"/></svg>
<svg style="left:1546px;top:90px" width="24" height="24" viewBox="0 0 24 24"><path d="M12.500 21c-2 0-2-2.800-.3-3.200-.5-2.800 1-4.300 2.800-3.600.3-4.500 5-4.500 5.500-.5.300 2.500 1.500 2.500 1.500 5 0 1.500-.7 2.300-1.800 2.300z" fill="#fff" stroke="#b5b5b5" stroke-width=".9"/><rect x="3.800" y="11.400" width="10.800" height="5.800" fill="#3465a4" stroke="#5c3566" stroke-width="1.200" stroke-dasharray="1.200 .7"/><path d="M8 12l1.200 3.500 1.200-3.500z" fill="#cfe0f5"/><circle cx="9" cy="7.600" r="3.700" fill="#f5a04a" stroke="#ce6a0c" stroke-width=".8" stroke-dasharray="1 .6"/><circle cx="8.300" cy="6.600" r="1.300" fill="#fcd9a8"/></svg>
<svg style="left:1578px;top:90px" width="24" height="24" viewBox="0 0 24 24"><path d="M4.500 2.800c5-1 12-2 13 5.500" fill="none" stroke="#aaa" stroke-width="1.300"/><path d="M2.700 3h3.600v4.500l-1 1.500 1 1.500v4l-1 1.500 1 1.500v5h-3.600v-5l1-1.500-1-1.500v-4l1-1.500-1-1.500z" fill="#fff" stroke="#888" stroke-width=".9"/><circle cx="4.500" cy="12.500" r=".8" fill="#888"/><path d="M16.400 7.500c2.300 1.500 4.300 5 3 8l-1.200 2.500h-3.600l-1.200-2.500c-1.300-3 .7-6.500 3-8z" fill="#fce94f" stroke="#c4a000" stroke-width="1"/><path d="M16.400 9v5.500" stroke="#333" stroke-width="1"/><rect x="14.300" y="17.600" width="4.300" height="5.800" fill="#3465a4" stroke="#204a87" stroke-width="1"/><path d="M15.800 18.500v4.500M17.200 18.500v4.500" stroke="#729fcf" stroke-width=".6"/></svg>
<svg style="left:1354px;top:122px" width="24" height="24" viewBox="0 0 24 24"><ellipse cx="12" cy="21" rx="7" ry="1.800" fill="rgba(0,0,0,.13)"/><path d="M6 17.500l9-9.500" stroke="#fff" stroke-width="3.400" stroke-linecap="round"/><path d="M6 17.500l9-9.500" stroke="#2e6bc0" stroke-width="2" stroke-linecap="round"/><path d="M10.500 12.800l4.500-4.800" stroke="#dfe8f4" stroke-width="1.600"/><path d="M5.800 17.300l-1 1.500" stroke="#888" stroke-width="1.600"/><path d="M13 7l3.800 3.800 1.200-1.200-.8-1.200c2-.8 3.200-2.600 2.300-4.300-1-1.800-3.300-1.300-4.300.3l-1.200-.8z" fill="#1a1a1a"/><circle cx="17.300" cy="4.700" r="1.300" fill="#3465a4"/><path d="M4.600 18.200c-1.600 1.800-1.300 3.800.3 3.800s2-1.800-.3-3.800z" fill="#3f78c4" stroke="#204a87" stroke-width=".6"/></svg>
<svg style="left:1386px;top:122px" width="24" height="24" viewBox="0 0 24 24"><ellipse cx="13" cy="21.500" rx="8" ry="1.800" fill="rgba(0,0,0,.13)"/><path d="M16 16.500l5.600 5.600" stroke="#555753" stroke-width="3.400" stroke-linecap="round"/><path d="M16.600 17l4.800 4.800" stroke="#d3d7cf" stroke-width="1.200" stroke-dasharray=".8 .8"/><circle cx="10" cy="10.400" r="7.800" fill="#a9c3e6" stroke="#9a9c97" stroke-width="1.500"/><path d="M2.900 10.400a7.100 7.100 0 0 1 14.200 0c-4 1.400-10 1.400-14.200 0z" fill="#c5d6ee"/><circle cx="10" cy="10.400" r="7" fill="none" stroke="#e8eef6" stroke-width=".6"/></svg>
<svg style="left:1418px;top:122px" width="24" height="24" viewBox="0 0 24 24"><ellipse cx="12" cy="22.500" rx="8" ry="1.200" fill="rgba(0,0,0,.12)"/><path d="M10.200 9c-3.500 3-5 8-4.800 13.200 1.200-4 2.500-7.500 5.300-10.500z M13.800 9c3.500 3 5 8 4.800 13.200-1.200-4-2.500-7.500-5.300-10.500z" fill="#729fcf" stroke="#204a87" stroke-width=".9"/><rect x="10.400" y="2" width="3.200" height="3.500" fill="#3d7bd0" stroke="#204a87" stroke-width=".8"/><rect x="9.600" y="5.300" width="4.800" height="5.400" rx="1.200" fill="#babdb6" stroke="#555753" stroke-width=".9"/><rect x="11" y="6.800" width="2" height="2" fill="#555753"/><rect x="10.200" y="13" width="3.600" height="4.200" rx="1" fill="#eeeeec" stroke="#555753" stroke-width=".9"/><path d="M3.500 15h5M15.500 15h5" stroke="#333" stroke-width=".8"/><circle cx="18" cy="19" r="1.500" fill="#fff" stroke="#555" stroke-width=".7"/></svg>
<svg style="left:1450px;top:122px" width="24" height="24" viewBox="0 0 24 24"><ellipse cx="11.500" cy="22" rx="6" ry="1.300" fill="rgba(0,0,0,.15)"/><path d="M11.500 2.800l4.200 4.200h-2.900v4.100h4.100v-2.900l4.200 4.200-4.200 4.200v-2.900h-4.100v4.100h2.900l-4.200 4.200-4.200-4.200h2.900v-4.100h-4.100v2.900l-4.200-4.200 4.200-4.200v2.900h4.100v-4.100h-2.900z" fill="#4076ba" stroke="#204a87" stroke-width=".6" stroke-linejoin="miter"/></svg>
<svg style="left:1482px;top:122px" width="24" height="24" viewBox="0 0 24 24"><rect x="6.500" y="8.300" width="10.800" height="9" rx="1" fill="#e8e8e8" stroke="#b0b0b0" stroke-width=".9"/><g fill="#000"><path d="M1.200 12.400l2.300-2.200v1.500h2.200v1.400h-2.200v1.500z M22.700 12.400l-2.300-2.200v1.500h-2.200v1.400h2.200v1.500z M11.900 2.600l2.200 2.300h-1.500v2.200h-1.400v-2.200h-1.500z M11.900 22.400l2.200-2.300h-1.500v-2.200h-1.400v2.200h-1.500z"/></g></svg>
<svg style="left:1514px;top:122px" width="24" height="24" viewBox="0 0 24 24"><ellipse cx="12" cy="22" rx="8" ry="1.200" fill="rgba(0,0,0,.1)"/><path d="M2 21.700l6.500-10.500 5.500 4.300z" fill="#d3d7cf" stroke="#777" stroke-width=".8"/><path d="M8.500 11.200l7-7.400M14 15.500l7.300-7.500" stroke="#888a85" stroke-width="1.200"/><path d="M8.500 11.200l4.500-4.800c1.800-1.300 4 .8 2.800 2.700l-1.800 6.400z" fill="#eeeeec" stroke="#888a85" stroke-width=".8"/><path d="M2 21.700l8-8.500" stroke="#fff" stroke-width=".7"/></svg>
<svg style="left:1546px;top:122px" width="24" height="24" viewBox="0 0 24 24"><ellipse cx="13" cy="21.500" rx="8" ry="1.400" fill="rgba(0,0,0,.13)"/><rect x="4.400" y="5.200" width="10.400" height="7.400" fill="#4f80c0" stroke="#204a87" stroke-width="1"/><rect x="7.500" y="11.500" width="11" height="8" fill="#3f74b8" stroke="#204a87" stroke-width="1" transform="rotate(40 13 15.500)"/><path d="M17 6.500c2-.8 4 .3 4.300 2.200l1.300-.3-1.500 3.500-3.200-2 1.400-.4c-.3-.8-1.200-1.200-2.300-.8z" fill="#fff" stroke="#204a87" stroke-width=".8"/><path d="M8 21.500c-2 .8-4-.3-4.300-2.200l-1.300.3 1.500-3.500 3.200 2-1.400.4c.3.800 1.200 1.200 2.300.8z" fill="#fff" stroke="#204a87" stroke-width=".8"/></svg>
<svg style="left:1578px;top:122px" width="24" height="24" viewBox="0 0 24 24"><ellipse cx="14" cy="22.300" rx="8" ry="1.200" fill="rgba(0,0,0,.13)"/><rect x="7" y="7.200" width="15.400" height="14" fill="#5a87c4" stroke="#204a87" stroke-width="1.500"/><rect x="8.800" y="9" width="11.800" height="10.400" fill="none" stroke="#8fb0dc" stroke-width=".7"/><rect x="2" y="3.600" width="6" height="5.400" fill="#729fcf" stroke="#204a87" stroke-width="1.300"/><path d="M8.500 4.500h6.500v5M3 10v6h5" fill="none" stroke="#204a87" stroke-width=".9" stroke-dasharray="1 1"/><path d="M5 6.300l10 10" stroke="#fff" stroke-width="1.600"/><path d="M17.200 18.400l-4.300-1.300 3-3z" fill="#fff"/></svg>
<svg style="left:1354px;top:154px" width="24" height="24" viewBox="0 0 24 24"><ellipse cx="12" cy="21" rx="9" ry="1.400" fill="rgba(0,0,0,.1)"/><path d="M6 5.300h10.500l4.500 14h-10.500z" fill="#9db8df" stroke="#3465a4" stroke-width=".9" opacity=".9"/><rect x="4.800" y="5.300" width="11.500" height="14" fill="#4f80c0" stroke="#204a87" stroke-width="1.100" opacity=".85"/><path d="M6 5.300l4.500 14" stroke="#204a87" stroke-width=".8"/><path d="M3 19.200h3.300v-1.600l3.200 2.700-3.200 2.700v-1.600h-3.300z" fill="#fff" stroke="#204a87" stroke-width=".9"/></svg>
<svg style="left:1386px;top:154px" width="24" height="24" viewBox="0 0 24 24"><ellipse cx="12" cy="21" rx="10" ry="1.500" fill="rgba(0,0,0,.12)"/><path d="M7 4.300h10l4.700 14.500h-19.400z" fill="#6f99d0" stroke="#204a87" stroke-width="1"/><rect x="7.800" y="4.800" width="8.400" height="11" fill="#4f80c0" stroke="#3465a4" stroke-width=".7"/><rect x="3.100" y="18.600" width="4.600" height="4" fill="#3465a4" stroke="#204a87" stroke-width=".8"/><rect x="16.300" y="18.600" width="4.600" height="4" fill="#3465a4" stroke="#204a87" stroke-width=".8"/><path d="M3.800 21.900v-2.300l.8.800 1.500-1.500.7.700-1.500 1.500.8.800z M20.200 21.900v-2.300l-.8.800-1.500-1.500-.7.700 1.500 1.500-.8.800z" fill="#fff"/></svg>
<svg style="left:1418px;top:154px" width="24" height="24" viewBox="0 0 24 24"><ellipse cx="12" cy="22" rx="10" ry="1.300" fill="rgba(0,0,0,.13)"/><path d="M12 4.300l8.800-2v20.200l-8.800-1.500z" fill="#8fb3e0" stroke="#204a87" stroke-width="1"/><rect x="1.200" y="4.300" width="11" height="16.800" fill="#3f74b8" stroke="#204a87" stroke-width="1.100"/><path d="M3.700 12.600l3.600-3.300v2.200h7.400v-2.200l3.600 3.300-3.600 3.300v-2.200h-7.400v2.200z" fill="#e6eef8" stroke="#b9cfea" stroke-width=".5"/></svg>
<svg style="left:1450px;top:154px" width="24" height="24" viewBox="0 0 24 24"><g stroke="#888a85" stroke-width="2.200"><path d="M5.600 5.300l14 3.100-1.200 12-6.900-7-7 5z"/></g><g stroke="#eeeeec" stroke-width=".8"><path d="M5.600 5.300l14 3.100-1.200 12-6.900-7-7 5z" fill="none"/></g><path d="M5.600 5.300l14 3.100-1.200 12-6.900-7-7 5z" fill="#f0f0f0" stroke="none"/><g stroke="#888a85" stroke-width="2.200" fill="none"><path d="M5.600 5.300l14 3.100-1.200 12-6.900-7-7 5z"/></g><g stroke="#eeeeec" stroke-width=".7" fill="none"><path d="M5.600 5.300l14 3.100-1.200 12-6.900-7-7 5z"/></g><g fill="#4f86cf" stroke="#204a87" stroke-width=".9"><circle cx="5.600" cy="5.300" r="3"/><circle cx="19.600" cy="8.400" r="3"/><circle cx="11.500" cy="13.400" r="3"/><circle cx="4.500" cy="18.400" r="3"/><circle cx="18.400" cy="20.400" r="3"/></g><g fill="#9cc0ec"><ellipse cx="5.600" cy="4.300" rx="1.800" ry="1"/><ellipse cx="19.600" cy="7.400" rx="1.800" ry="1"/><ellipse cx="11.500" cy="12.400" rx="1.800" ry="1"/><ellipse cx="4.500" cy="17.400" rx="1.800" ry="1"/><ellipse cx="18.400" cy="19.400" rx="1.800" ry="1"/></g></svg>
<svg style="left:1482px;top:154px" width="24" height="24" viewBox="0 0 24 24"><ellipse cx="12" cy="22" rx="9" ry="1.300" fill="rgba(0,0,0,.18)"/><text x="11.900" y="21.800" text-anchor="middle" font-family="Liberation Sans,sans-serif" font-weight="bold" font-size="27.500" fill="#111" stroke="#111" stroke-width=".9">A</text></svg>
<svg style="left:1514px;top:154px" width="24" height="24" viewBox="0 0 24 24"><ellipse cx="13" cy="22" rx="8" ry="1.300" fill="rgba(0,0,0,.13)"/><path d="M5 9.500l-2.500.3c-1 .2-1.200.8-1.200 1.800v7h2v-6.500l2-.3z" fill="#729fcf" stroke="#3465a4" stroke-width=".7"/><path d="M4.500 11l11.500-6 6 11.500-11.500 6z" fill="#f2f2f0" stroke="#888a85" stroke-width="1"/><path d="M10.500 22l11-5.800" stroke="#d3d7cf" stroke-width="1.500"/><path d="M12.300 12c-1.500-3.500-1-8 1.500-9.200 2.200-.8 4 1.500 3.600 4" fill="none" stroke="#999" stroke-width="1.100"/><circle cx="12.200" cy="12.200" r="1.900" fill="#babdb6" stroke="#777" stroke-width=".8"/></svg>
<svg style="left:1546px;top:154px" width="24" height="24" viewBox="0 0 24 24"><defs><linearGradient id="bg1"><stop offset="0" stop-color="#606060"/><stop offset="1" stop-color="#fafafa"/></linearGradient></defs><ellipse cx="12" cy="22.300" rx="10" ry="1" fill="rgba(0,0,0,.15)"/><rect x="3.700" y="4.700" width="16.600" height="16.600" fill="url(#bg1)" stroke="#666" stroke-width="1.400"/></svg>
<svg style="left:1578px;top:154px" width="24" height="24" viewBox="0 0 24 24"><ellipse cx="14" cy="21.800" rx="6" ry="1" fill="rgba(0,0,0,.13)"/><path d="M3.700 21.200l1.800-5.200 12.500-11.400c1.800-1.500 4.500 1.300 3 3l-12.400 11.500z" fill="#d08a2c" stroke="#8f5902" stroke-width=".9"/><path d="M3.700 21.200l1.800-5.200 3.100 2.900z" fill="#e9d4a6" stroke="#8f5902" stroke-width=".6"/><path d="M3.700 21.200l.8-2 1.200 1.200z" fill="#222"/><path d="M16.800 5.800l3 3 1.200-1.200c1.500-1.700-1.200-4.500-3-3z" fill="#ef2929" stroke="#a40000" stroke-width=".6"/><path d="M16 6.500l3.100 3" stroke="#c0c0c0" stroke-width="1.200"/><path d="M7 16.500l10-9.200" stroke="#f0b860" stroke-width="1"/></svg>
<svg style="left:1354px;top:186px" width="24" height="24" viewBox="0 0 24 24"><ellipse cx="10" cy="22.300" rx="8" ry="1.200" fill="rgba(0,0,0,.13)"/><path d="M11 14l8-10.500c1-1.200 2.300-.5 1.800.8l-6.300 11.700z" fill="#c4701a" stroke="#8f5902" stroke-width=".8"/><path d="M13 13.500l6.500-9.300" stroke="#eea050" stroke-width=".9"/><path d="M8.300 16.500l2.700-2.800 3.600 2.500-2 3.300z" fill="#d3d7cf" stroke="#888a85" stroke-width=".8"/><path d="M8.300 16.500l4.300 3c-2 3-6.500 3.600-11.200 4 2.600-1.800 4.400-4 6.900-7z" fill="#111"/></svg>
<svg style="left:1386px;top:186px" width="24" height="24" viewBox="0 0 24 24"><ellipse cx="13" cy="20.500" rx="9" ry="1.300" fill="rgba(0,0,0,.1)"/><path d="M2.500 13.500l4.500-7.500h12.500c1.200 0 1.800.6 1.800 1.800v4.200l-5 7h-12c-1.200 0-1.800-.6-1.800-1.800z" fill="#f5a3a3" stroke="#ef2929" stroke-width="1.200" stroke-linejoin="round"/><path d="M2.800 14.300h12.700l5.500-7.500" fill="none" stroke="#fbd0d0" stroke-width="1"/><path d="M3 14.800h12.500v4" fill="none" stroke="#ef5050" stroke-width=".5"/><path d="M7.200 6.800h12l-4.200 6.700h-11.500z" fill="#e8b4b0"/></svg>
<svg style="left:1418px;top:186px" width="24" height="24" viewBox="0 0 24 24"><path d="M12.900 14.500c1 1.800 2.500 4.300 4.300 4.700 1.800.3 1.500-3.500 4.700-4.500" fill="none" stroke="#9a9c98" stroke-width="1.700"/><path d="M12.900 14.500c1 1.800 2.500 4.300 4.300 4.700" fill="none" stroke="#d8d8d6" stroke-width=".6"/><path d="M13.200 12l-6.300 6.200" stroke="#2e3436" stroke-width="3.600" stroke-linecap="round"/><path d="M13 12.200l-5.900 5.800" stroke="#fff" stroke-width="2" stroke-linecap="round"/><path d="M21 4.600l-7.800 7.400" stroke="#17191a" stroke-width="3.600" stroke-linecap="round"/><path d="M21 4.600l-7.800 7.400" stroke="#777" stroke-width="3" stroke-dasharray=".5 .9" opacity=".55"/><circle cx="10.300" cy="9" r="1.400" fill="#6a6c68"/><path d="M10.500 9.500l1.500 1.800" stroke="#555" stroke-width="1"/><path d="M6 19l-1 1.200-3.900 3.300 3.300-3.900z" fill="#3465a4"/><path d="M5.800 19.300l-4.700 4.200" stroke="#729fcf" stroke-width="2.200" opacity=".55"/></svg>
<svg style="left:1450px;top:186px" width="24" height="24" viewBox="0 0 24 24"><ellipse cx="10" cy="20.500" rx="8.500" ry="1.300" fill="rgba(0,0,0,.2)"/><rect x="3.200" y="9.300" width="12.600" height="10.800" rx="2.600" fill="#e4ebf6" stroke="#3a3d3e" stroke-width="1.300"/><path d="M4.300 13.800h10.400v3.600c0 1-.8 1.800-1.800 1.800h-6.800c-1 0-1.800-.8-1.800-1.800z" fill="#1f4a94"/><path d="M5 13v-1.300c0-.8.600-1.400 1.400-1.400h1" fill="none" stroke="#5a86cc" stroke-width="1.100"/><rect x="6.500" y="11.500" width="7.500" height="2.300" fill="#5a86cc" opacity=".8"/><path d="M5.200 8.800c-.6-2 .3-4.700 4.300-4.700s4.900 2.700 4.300 4.700c-.3 1-8.300 1-8.600 0z" fill="#5a5c5a" stroke="#2e3436" stroke-width=".9"/><ellipse cx="9.500" cy="6" rx="2.600" ry="1.300" fill="#777976"/><path d="M19.800 20.600l1.300-3.200.4 2.600 2.800-.8-2.300 1.800 1.800 1.500-2.700-.5-.5 2-1-1.800-2.800 1.200 2-2.200-2.800-1.200z" fill="#2f5a9c"/><circle cx="22.300" cy="15.500" r=".6" fill="#4a7ac0"/><circle cx="17.200" cy="16.500" r=".6" fill="#4a7ac0"/><rect x="13.200" y="22" width="1.800" height=".9" fill="#204a87"/></svg>
<svg style="left:1482px;top:186px" width="24" height="24" viewBox="0 0 24 24"><ellipse cx="11.500" cy="20.300" rx="9" ry="1.300" fill="rgba(0,0,0,.15)"/><path d="M4 19.300v-5.500c0-1 .8-1.500 1.500-1.500h12c.7 0 1.500.5 1.500 1.500v5.500z" fill="#f4ecd4" stroke="#a85a00" stroke-width="1.200"/><path d="M5 15.800h13v2.800h-13z" fill="#d6cfa8"/><path d="M9.500 16l2 1.500 2-1.500z" fill="#333"/><rect x="10.600" y="9.500" width="1.900" height="3" fill="#fff" stroke="#a85a00" stroke-width=".9"/><circle cx="11.500" cy="6.700" r="3" fill="#f2efe6" stroke="#a85a00" stroke-width="1.100"/><circle cx="11.500" cy="6.300" r="1.300" fill="#d0cec4"/></svg>
<svg style="left:1514px;top:186px" width="24" height="24" viewBox="0 0 24 24"><g transform="rotate(45 12.200 13)"><rect x="1" y="9.300" width="22.400" height="7.400" rx="3.700" fill="#dcc20a" stroke="#b89600" stroke-width="1"/></g><g transform="rotate(-45 12.200 13)"><rect x="1" y="9.300" width="22.400" height="7.400" rx="3.700" fill="#e4ca10" stroke="#b89600" stroke-width="1"/><rect x="9" y="10" width="6.400" height="6" fill="#efdf60" stroke="#c4a000" stroke-width=".6"/></g></svg>
<svg style="left:1546px;top:186px" width="24" height="24" viewBox="0 0 24 24"><path d="M8.500 7l12.500 2.500-1 14.500-18-5.500z" fill="#4f80c0" stroke="#204a87" stroke-width="1"/><path d="M10 9l9.500 2-.8 11" fill="none" stroke="#9cc0ec" stroke-width=".7"/><path d="M2.200 15.300v-3.800c0-.8.600-1.200 1.200-1.200h9.600c.6 0 1.200.4 1.200 1.200v3.800z" fill="#f4ecd4" stroke="#a85a00" stroke-width="1.100"/><path d="M3.200 12.800h10v1.600h-10z" fill="#d6cfa8"/><path d="M6.700 13l1.500 1 1.500-1z" fill="#333"/><rect x="7.400" y="7.800" width="1.700" height="2.500" fill="#fff" stroke="#a85a00" stroke-width=".8"/><circle cx="8.200" cy="5.200" r="2.700" fill="#f2efe6" stroke="#a85a00" stroke-width="1"/><circle cx="8.200" cy="4.900" r="1.100" fill="#d0cec4"/></svg>
<svg style="left:1578px;top:186px" width="24" height="24" viewBox="0 0 24 24"><ellipse cx="11.500" cy="21.300" rx="7" ry="1.400" fill="rgba(0,0,0,.15)"/><path d="M11.500 5c1.500 4.500 6.300 7 6.300 11a6.300 5.500 0 0 1-12.600 0c0-4 4.800-6.500 6.300-11z" fill="#a9c3e6" stroke="#3465a4" stroke-width="1"/><path d="M7 16c0-2.500 2.500-4.500 4-7.500" fill="none" stroke="#e4edf8" stroke-width="1.400"/></svg>
<svg style="left:1354px;top:218px" width="24" height="24" viewBox="0 0 24 24"><path d="M4 21l2-3.500c-1.500-2.500-2-5-1.500-6.800l4.500-3.500 4.800-2.200 3.500 2.500c1 2.300.5 5.200-.5 7.200l-4 3.500-3.700-.4-3 3.800z" fill="#fbe3d6" stroke="#c17d11" stroke-width="1" transform="translate(0,-.5)"/><path d="M14 5l6-2.500v8l-3 3z" fill="#f7d5c4" opacity=".8"/><path d="M6 12l3.500 3M7.300 10.300l3.600 3.200M8.800 8.800l3.500 3.200" stroke="#c17d11" stroke-width=".7"/><path d="M9 18l2.500-3 1.500 1.500" fill="none" stroke="#8f5902" stroke-width="1.300"/></svg>
<svg style="left:1386px;top:218px" width="24" height="24" viewBox="0 0 24 24"><ellipse cx="13" cy="19" rx="9" ry="3" fill="rgba(0,0,0,.06)"/><path d="M12 12.500l9.300-9.800" stroke="#2e3436" stroke-width="2" stroke-linecap="round"/><path d="M13 12.800l8.500-8.300" stroke="#999" stroke-width=".6"/><circle cx="10" cy="14.900" r="5.700" fill="#555753" stroke="#2e3436" stroke-width="1.200"/><circle cx="10" cy="14.900" r="4.600" fill="none" stroke="#6a6c68" stroke-width=".6"/></svg>
<svg style="left:1377px;top:928px" width="13" height="13" viewBox="0 0 13 13"><rect x=".5" y=".5" width="12" height="12" rx="1" fill="#4a78c0" stroke="#2a4f90"/><rect x="1.500" y=".5" width="10" height="2.500" fill="#e02828"/><rect x="1.500" y="3" width="10" height="3" fill="#fff"/><rect x="3" y="8" width="7" height="4.500" fill="#d8d8d8" stroke="#666" stroke-width=".5"/><rect x="4.500" y="9" width="1.500" height="2.500" fill="#3a68b0"/></svg>
<svg style="left:1439px;top:928px" width="13" height="13" viewBox="0 0 13 13"><defs><pattern id="chk" width="2" height="2" patternUnits="userSpaceOnUse"><rect width="1" height="1" fill="#333"/><rect x="1" y="1" width="1" height="1" fill="#333"/></pattern><pattern id="chk2" width="2" height="2" patternUnits="userSpaceOnUse"><rect width="1" height="1" fill="#2a4f90"/><rect x="1" y="1" width="1" height="1" fill="#2a4f90"/></pattern></defs><rect x=".5" y=".5" width="12" height="12" rx="1" fill="#e8e0b0"/><rect x=".5" y=".5" width="12" height="2" fill="#e08080"/><path d="M3 9l5-5 2 2-5 5z" fill="#e8d060"/><rect width="13" height="13" fill="url(#chk2)" opacity=".85"/></svg>
<svg style="left:1502px;top:928px" width="12" height="13" viewBox="0 0 12 13"><path d="M1 2c0-1.200 10-1.200 10 0l-1 10c0 1-8 1-8 0z" fill="#c8c8c8"/><path d="M1 2c0-1.200 10-1.200 10 0l-1 10c0 1-8 1-8 0z" fill="url(#chk)" opacity=".8"/></svg>
<svg style="left:1564px;top:928px" width="14" height="13" viewBox="0 0 14 13"><path d="M4 1v1.500h-3l3 3v-1.500h6v5h-4.500v3h7.500v-11z" fill="#f4d820" stroke="#c4a000" stroke-width=".8"/><circle cx="3" cy="10" r="2.300" fill="#4a78c0" stroke="#2a4f90" stroke-width=".6"/></svg>
<style>
#tb{left:0;top:1010px;width:1680px;height:40px;overflow:hidden;background:
 linear-gradient(90deg,#245f98 0,#2a71ad 60px,#2b7ab9 150px,#2f86c4 350px,#3089c7 620px,#2279be 850px,#2a81c6 900px,#1f70b6 1050px,#256fb6 1150px,#1f62a4 1215px,#1d5590 1290px,#1b4a7f 1400px,#1a4373 1560px,#1a416f 1680px)}
#tb::before{content:"";position:absolute;left:0;top:0;width:1680px;height:2px;background:linear-gradient(180deg,#20384f 0,#20384f 1px,rgba(140,190,230,.55) 1px,rgba(140,190,230,.55) 2px)}
.tbtn{position:absolute;top:1px;height:38px;box-sizing:border-box;border:1px solid rgba(20,50,80,.75);border-radius:3px;box-shadow:inset 0 0 0 1px rgba(190,225,250,.65);background:linear-gradient(180deg,rgba(160,210,245,.45) 0,rgba(130,190,235,.35) 50%,rgba(90,160,215,.30) 51%,rgba(120,185,230,.4) 100%)}
.tbact{background:linear-gradient(180deg,rgba(215,238,252,.75) 0,rgba(190,225,248,.65) 50%,rgba(150,200,238,.6) 51%,rgba(185,222,245,.7) 100%)}
.stk{position:absolute;top:1px;height:38px;width:5px;box-sizing:border-box;border:1px solid rgba(20,50,80,.7);border-left:none;border-radius:0 3px 3px 0;box-shadow:inset -1px 0 0 0 rgba(190,225,250,.6);background:rgba(130,190,235,.35)}
</style>
<div class="a" id="tb">
<div class="a" style="left:1220px;top:-10px;width:28px;height:60px;transform:skewX(48deg);background:linear-gradient(90deg,rgba(150,200,235,0),rgba(165,208,240,.7) 50%,rgba(150,200,235,0));filter:blur(2px)"></div>
<div class="a" style="left:780px;top:-10px;width:60px;height:70px;transform:skewX(-50deg);background:linear-gradient(90deg,rgba(120,180,230,0),rgba(120,180,230,.25) 50%,rgba(120,180,230,0))"></div>
<!-- start orb -->
<div class="a" style="left:8px;top:2px;width:37px;height:37px;border-radius:50%;background:radial-gradient(circle at 50% 38%,#5fb0e8 0,#3e8fd0 30%,#2464a8 58%,#163f78 80%,#0f2c58 100%);box-shadow:0 0 0 1px rgba(160,205,240,.6),0 0 4px 1px rgba(5,20,45,.55)"></div>
<div class="a" style="left:11px;top:4px;width:31px;height:17px;border-radius:50% 50% 45% 45%/70% 70% 30% 30%;background:linear-gradient(180deg,rgba(255,255,255,.5),rgba(255,255,255,.08))"></div>
<div class="a" style="left:12px;top:26px;width:29px;height:13px;border-radius:50%;background:radial-gradient(ellipse at 50% 85%,rgba(70,225,255,.95),rgba(70,225,255,0) 70%)"></div>
<svg style="left:15px;top:8px" width="25" height="24" viewBox="0 0 25 24"><path d="M3.500 3.800c3-1.800 5.500-2 8.500-.5l-1.600 7.200c-3-1.500-5.500-1.300-8.500.3z" fill="#e8632a"/><path d="M13.300 3.800c3 1.300 5.700 1.300 8.700-.5l-1.600 7.200c-3 1.800-5.700 1.800-8.700.5z" fill="#86c23a"/><path d="M1.500 12.300c3-1.600 5.500-1.800 8.500-.3l-1.600 7.300c-3-1.500-5.500-1.300-8.500.3z" fill="#3a9ae0"/><path d="M11.300 12.500c3 1.300 5.700 1.300 8.700-.5l-1.600 7.300c-3 1.800-5.700 1.800-8.700.5z" fill="#f8c028"/><path d="M4 4.500c2.500-1.300 5-1.500 7.300-.5M13.800 4.500c2.500 1 5 1 7.500-.3" fill="none" stroke="rgba(255,255,255,.45)" stroke-width="1"/></svg>
<!-- buttons -->
<div class="tbtn" style="left:60px;width:51px"></div><div class="stk" style="left:110px"></div><div class="stk" style="left:114px"></div>
<div class="tbtn" style="left:184px;width:51px"></div><div class="stk" style="left:234px"></div><div class="stk" style="left:238px"></div>
<div class="tbtn" style="left:246px;width:59px"></div>
<div class="tbtn" style="left:308px;width:58px"></div>
<div class="tbtn" style="left:370px;width:54px"></div><div class="stk" style="left:423px"></div>
<div class="tbtn" style="left:432px;width:51px"></div><div class="stk" style="left:482px"></div>
<div class="tbtn" style="left:494px;width:58px"></div>
<div class="tbtn tbact" style="left:555px;width:60px"></div>
</div>
<div class="a" style="left:0;top:1010px;width:1680px;height:40px;overflow:hidden">
<!-- explorer folder -->
<svg style="left:68px;top:7px" width="34" height="30" viewBox="0 0 34 30"><defs><linearGradient id="fo" x1="0" y1="0" x2="0" y2="1"><stop offset="0" stop-color="#fbeeb0"/><stop offset="1" stop-color="#f2d673"/></linearGradient><linearGradient id="fs" x1="0" y1="0" x2="0" y2="1"><stop offset="0" stop-color="#d8f2fc"/><stop offset="1" stop-color="#7cc4ea"/></linearGradient></defs>
<path d="M2 3.500c0-1 .5-1.500 1.500-1.500h12.500l2 2h-16z" fill="#f3dc88" stroke="#d9b95a" stroke-width=".6"/><rect x="4" y="2.200" width="3" height="2" fill="#1fae3a"/><rect x="7" y="2.200" width="6" height="2" fill="#fff"/>
<path d="M10 5.500c0-1 .5-1.500 1.500-1.500h17.500c1 0 1.500.5 1.500 1.500v2h-20.500z" fill="#f3dc88" stroke="#d9b95a" stroke-width=".6"/><rect x="12.500" y="4.200" width="3" height="2" fill="#d83a2a"/><rect x="15.500" y="4.200" width="6" height="2" fill="#fff"/>
<path d="M18 7.500c0-1 .5-1.500 1.500-1.500h10.500c1 0 1.500.5 1.500 1.500v2h-13.500z" fill="#f3dc88" stroke="#d9b95a" stroke-width=".6"/><rect x="20.500" y="6.200" width="3" height="2" fill="#2a8ae0"/><rect x="23.500" y="6.200" width="5" height="2" fill="#fff"/>
<path d="M1.500 5c0-1 .5-1.500 1.500-1.500h13l2.500 4h13c1 0 1.500.5 1.500 1.500v17.500c0 1-.5 1.500-1.500 1.500h-28.500c-1 0-1.500-.5-1.500-1.500z" fill="url(#fo)" stroke="#d9b654" stroke-width=".8"/>
<path d="M5.500 29v-10.500c0-1.500 1-2.500 2.500-2.500h18c1.500 0 2.500 1 2.500 2.500v10.500h-6v-6.500h-11v6.500z" fill="url(#fs)" stroke="#6fb5dd" stroke-width=".8" opacity=".95"/>
<path d="M8 10v12M3.500 17.500h11M5 14l7 7M11.500 13.500l-6 7" stroke="#fff" stroke-width=".7" opacity=".9"/></svg>
<!-- thunderbird x2 -->
<svg style="left:135px;top:4px" width="34" height="34" viewBox="0 0 34 34"><use href="#tbird"/></svg>
<svg style="left:259px;top:4px" width="34" height="34" viewBox="0 0 34 34"><defs><g id="tbird"><defs><radialGradient id="tbg" cx=".5" cy=".3" r=".75"><stop offset="0" stop-color="#5f9fe0"/><stop offset=".5" stop-color="#2d68b8"/><stop offset="1" stop-color="#143c80"/></radialGradient></defs>
<path d="M8 4c4-3.500 12-3.500 17 .5 5 4 6.500 11 4 17-2 5-6.500 8.500-12 9-2-.3-3.500-1-5-2.500-5-.5-9-4-10-9-.8-5.500 1.500-11.500 6-15z" fill="url(#tbg)"/>
<path d="M10.500 4.500c5-2.500 11-1.500 15 2.500 3.500 3.500 4.500 8.500 3.500 13-1-5-4-9.500-9-11-3.500-1-7-.5-9.500 1.500l-3-2.500z" fill="#5b97dc" opacity=".75"/>
<path d="M14 5l1.500 4M18 4.500l.5 4.500M22 6l-1 4M25.500 9l-2.500 3" stroke="#8fbcec" stroke-width=".7" opacity=".7"/>
<path d="M4.500 10.500c1-3 3.500-5 6.500-5.500l2.500 3.500-3.500 4z" fill="#1a468c"/><path d="M7.500 8.800l2.300-.3-1.300 1.800z" fill="#f5a623"/><circle cx="9.300" cy="8" r=".7" fill="#fff"/>
<path d="M4 15.500c0-1 .5-1.700 1.500-2l12-3.500c1-.3 2 0 2.500 1l4.500 9c.5 1 .2 2-.8 2.500l-10.500 5c-1 .5-2 .2-2.700-.7l-6-9c-.4-.7-.5-1.500-.5-2.300z" fill="#f6f3ec" stroke="#c5bfb0" stroke-width=".6"/>
<path d="M4.500 14.500l10 6.500 5.500-10" fill="none" stroke="#bdb7a8" stroke-width=".9"/><path d="M11 27l3.500-6 9 .5" fill="none" stroke="#d5d0c2" stroke-width=".7"/>
<path d="M26 13c3 5 2.500 12-2 16.500l-5 2c6.500.5 12-5 12.500-12 .2-3-1-6-3-8.500z" fill="#1b4a96"/>
<path d="M12 30c-1.500-.5-3-1.500-4-3l2 .5z" fill="#143c80"/></g></defs><use href="#tbird"/></svg>
<!-- firefox -->
<svg style="left:192px;top:4px" width="34" height="34" viewBox="0 0 34 34"><defs><radialGradient id="ffo" cx=".75" cy=".35" r=".9"><stop offset="0" stop-color="#ffe14a"/><stop offset=".3" stop-color="#fba21e"/><stop offset=".65" stop-color="#ee5f1c"/><stop offset="1" stop-color="#d03a18"/></radialGradient><radialGradient id="ffb" cx=".45" cy=".3" r=".75"><stop offset="0" stop-color="#6fc0f0"/><stop offset=".5" stop-color="#2a78c8"/><stop offset="1" stop-color="#1a3f90"/></radialGradient></defs>
<path d="M3.500 9c.5-2 1.500-3.500 3-4.500 0 1 .2 1.800.6 2.500 2.500-3 6.500-4.500 10.500-4 6 .5 11 4.500 12.500 10 1.500 6-1 12.500-6.500 15.500-5.500 3-12.500 2-17-2.500-4-4-5.500-11-3.100-17z" fill="url(#ffo)"/>
<circle cx="18" cy="13.500" r="9.300" fill="url(#ffb)"/>
<path d="M5 8c2-1.500 4.500-2 7-1.300-1.500 1-2.300 2.300-2.300 3.800 1.500.5 3.500.6 5.300.3-.3 1.500-1.800 2.300-3 3 .3 1.300.8 2.300 0 3.500 2 1.800 5 2.300 7.500 1.300 2.500-.8 4-2.500 4.500-4.500.8 3-.5 6.500-3.500 8.500-4 2.500-9.500 2-13-1.500-3.500-3.300-4.500-8.800-2.500-13.100z" fill="#ee6a1c"/>
<path d="M27.500 9c2.500 4 2.800 9.500.5 13.500 0-3-.8-5.500-2.300-7.500.8-2 1.300-4 1.800-6z" fill="#ffd83a" opacity=".9"/></svg>
<!-- word -->
<svg style="left:320px;top:5px" width="34" height="32" viewBox="0 0 34 32"><path d="M10 9l20-1 2.500 19-20 3z" fill="#f4f6fa" stroke="#b5c3dc" stroke-width=".7"/><path d="M14 20l14-1M14.500 23l14-1.500M15 26l13-1.500" stroke="#c9d3e6" stroke-width=".9"/><rect x="2" y="1.500" width="26" height="26" rx="1.500" fill="#fff" stroke="#8ea4cc" stroke-width=".9"/><path d="M2.500 20c8 1 17-2 25-9v16h-25z" fill="#dfe8f6"/>
<text x="15" y="21.500" text-anchor="middle" font-family="Liberation Sans,sans-serif" font-weight="bold" font-size="23" fill="#2456b4" stroke="#2456b4" stroke-width=".8">W</text></svg>
<!-- gimp wilber x2 -->
<svg style="left:378px;top:5px" width="38" height="32" viewBox="0 0 38 32"><defs><g id="wil"><path d="M3 14c0-4 4-7 9-7 3 0 5 1 7 1 3 0 5-3 7-6 1 5 1.500 11-1 15-2.500 4-7 6-11.500 6-4 0-6-2-7-4-2-.5-3.500-2.500-3.500-5z" fill="#7d776a" stroke="#3f3b33" stroke-width=".8"/><path d="M12 8c3 0 5 1 7 1 3 0 5-3 6.500-5 .5 4 .5 8-1.500 11-3-3-8-5-12-7z" fill="#9d9686" opacity=".7"/><ellipse cx="6" cy="14.500" rx="4.200" ry="3.400" fill="#161616"/><ellipse cx="5" cy="13.300" rx="1.500" ry=".9" fill="#777"/><circle cx="13.500" cy="12" r="2.600" fill="#fff" stroke="#333" stroke-width=".5"/><circle cx="13.800" cy="12.300" r="1" fill="#111"/><circle cx="19" cy="12.500" r="2.200" fill="#fff" stroke="#333" stroke-width=".5"/><circle cx="19.200" cy="12.800" r=".9" fill="#111"/><path d="M15 19.500l3.500-1 10 7.500-1.500 1.500z" fill="#c58a3c" stroke="#5a3a10" stroke-width=".5"/><path d="M26 24.500l3.500 1.500.5 3.500-3-2z" fill="#333"/><path d="M23.500 22.800l2.500 2" stroke="#bbb" stroke-width="1.600"/></g></defs><use href="#wil" transform="translate(3,1)"/></svg>
<svg style="left:566px;top:5px" width="38" height="32" viewBox="0 0 38 32"><use href="#wil" transform="translate(3,1)"/></svg>
<!-- irfanview -->
<svg style="left:441px;top:4px" width="34" height="34" viewBox="0 0 34 34"><path d="M8 3l3 3c1.500-.8 3.500-.8 5 0l3-3 .5 5.500c1 1.500 1 3 .5 4.500l4-1c-.5-3 1-5.500 3.500-5.500 2 0 3.500 1.500 3 4-.3 2-2 3-3.500 3 1.500.8 2 2.500 1.500 4-1 0-2-.5-3-.5-1.500 0-2.500 1-3 2.500 1.500 1.500 4 1 5.500.5 0 2-1 3.500-3 4-2 .5-4-.3-5-1.500.3 2.500.3 5.500-.5 8-2.500 1-5.500 1.500-8.500.5-1-3-1-6-.5-9-2 1.500-4.500 2-7 1.500-.5-2 0-4.500 1.500-6 1.500.5 3 .3 4.500-.5-2.500-1-5-2-6-4.500l2.500-3.500c1.500 1.500 3.500 2.500 5.500 2.500-.5-1.500-.3-3 .5-4.500z" fill="#ff0000"/><path d="M9.500 8.500c2-1.300 6-1.300 8 0-.3 2-1.700 3-4 3s-3.700-1-4-3z" fill="#111"/><circle cx="11.500" cy="9.200" r=".8" fill="#ddd"/><circle cx="15.500" cy="9.200" r=".8" fill="#ddd"/></svg>
<!-- pdf xchange -->
<svg style="left:506px;top:4px" width="34" height="34" viewBox="0 0 34 34"><defs><linearGradient id="pd" x1="0" y1="0" x2="0" y2="1"><stop offset="0" stop-color="#eef5fc"/><stop offset=".5" stop-color="#9fc4ea"/><stop offset="1" stop-color="#5a90d0"/></linearGradient></defs><rect x="2.500" y="1.500" width="26" height="29" rx="2" fill="url(#pd)" stroke="#6d9ad0" stroke-width=".8"/><rect x="4" y="2" width="2" height="8" fill="#d03ad0"/><rect x="6" y="2" width="2" height="8" fill="#3a5ae0"/><rect x="8" y="2" width="2" height="8" fill="#2ac0e0"/><rect x="10" y="2" width="2" height="8" fill="#3ad04a"/><rect x="12" y="2" width="2" height="8" fill="#e8e03a"/><rect x="14" y="2" width="2" height="8" fill="#f0902a"/>
<path d="M4 15c4-5 11-7 17-4 2.500 1.300 4.500 3 6 5-3 3-7 5-12 5-4.500 0-8.500-2.500-11-6z" fill="#dff0fc" stroke="#2a6ac0" stroke-width="1.300"/><circle cx="15" cy="15.500" r="4.300" fill="#2a7fd8"/><circle cx="15" cy="15.500" r="2" fill="#0a2a60"/>
<rect x="13" y="19.500" width="19" height="10" rx="1" fill="#f26a1a" stroke="#fff" stroke-width=".7"/><text x="22.500" y="27.800" text-anchor="middle" font-family="Liberation Sans,sans-serif" font-weight="bold" font-size="9" fill="#fff">PDF</text></svg>
</div>
<div class="a" style="left:0;top:1010px;width:1680px;height:40px;overflow:hidden;color:#fff">
<div class="t" style="left:1301px;top:11px;font-size:12px;color:#fff">DE</div>
<!-- deskband -->
<div class="a" style="left:1351px;top:1px;width:94px;height:45px;box-sizing:border-box;border:1px solid rgba(150,185,220,.55);border-right:1px solid #10243c;border-radius:12px 0 0 0;background:linear-gradient(180deg,rgba(120,160,205,.38),rgba(90,130,180,.18) 60%,rgba(60,100,150,.1))"></div>
<svg style="left:1364px;top:11px" width="48" height="20" viewBox="0 0 48 20"><path d="M1 18.500v-3.500h8.500v-3.500h8.500v-3.500h8.500v-3.500h8.500v-3.500h9.500v17.500z" fill="#0d8a2c" stroke="#fff" stroke-width="1.300" stroke-linejoin="miter"/><path d="M9.800 18v-3M18.300 18v-6.500M26.800 18v-10M35.300 18v-13.500" stroke="#063" stroke-width="1"/><path d="M1.500 18.600h43.300v-17.300" fill="none" stroke="#000" stroke-width="1"/></svg>
<svg style="left:1414px;top:12px" width="18" height="20" viewBox="0 0 18 20"><path d="M9 6.500l2.300 12h-4.600z" fill="#fff"/><circle cx="9" cy="6" r="1.600" fill="#fff"/><g fill="none" stroke="#fff" stroke-width="1.300"><path d="M5.800 2.500c-1.500 2-1.500 5 0 7M12.200 2.500c1.500 2 1.500 5 0 7M3.300 1c-2.300 3-2.300 7 0 10M14.700 1c2.300 3 2.300 7 0 10"/></g></svg>
<!-- tray arrow -->
<svg style="left:1451px;top:18px" width="9" height="6"><path d="M0 5.500l4.300-5 4.300 5z" fill="#fff"/></svg>
<!-- flag -->
<svg style="left:1471px;top:13px" width="18" height="16" viewBox="0 0 18 16"><path d="M2 .5v15" stroke="#fff" stroke-width="1.600"/><path d="M3 1.500c3-1.300 4.500 1.300 7.500.3 1.500-.5 3 .5 4.500.5v7c-2 0-3-1-5-.3-2.500 1-4.500-1.300-7-.3z" fill="#fff"/><circle cx="12.300" cy="11.400" r="4.300" fill="#e02020" stroke="#fff" stroke-width=".7"/><path d="M10.500 9.600l3.600 3.600M14.100 9.600l-3.600 3.600" stroke="#fff" stroke-width="1.400"/></svg>
<!-- power -->
<svg style="left:1495px;top:13px" width="17" height="17" viewBox="0 0 17 17"><rect x="1.500" y="3" width="8" height="11.500" rx="1" fill="none" stroke="#fff" stroke-width="1.500"/><rect x="4" y="1" width="3" height="2" fill="#fff"/><path d="M8 4h7v4c0 2-1.500 3-3.500 3s-3.500-1-3.500-3z" fill="#fff" stroke="#1d4a7d" stroke-width=".6"/><path d="M9.800 1v3M13.200 1v3" stroke="#fff" stroke-width="1.500"/><path d="M11.500 11v3c0 1-1 1.500-2 1.500" fill="none" stroke="#fff" stroke-width="1.300"/></svg>
<!-- signal -->
<svg style="left:1520px;top:15px" width="16" height="12" viewBox="0 0 16 12"><g fill="#fff"><rect x="0" y="9.500" width="2" height="2"/><rect x="3.300" y="7.500" width="2.400" height="4"/><rect x="6.600" y="5" width="2.400" height="6.500"/><rect x="9.900" y="2.500" width="2.400" height="9"/><rect x="13.200" y="0" width="2.400" height="11.500"/></g></svg>
<!-- dropbox -->
<svg style="left:1544px;top:13px" width="17" height="16" viewBox="0 0 17 16"><g fill="#3d9ae8" stroke="#bfe0fa" stroke-width=".4"><path d="M4.200.5l4 2.600-4 2.600-4-2.600z M12.200.5l4 2.600-4 2.600-4-2.600z M4.200 5.700l4 2.600-4 2.600-4-2.600z M12.200 5.700l4 2.600-4 2.600-4-2.600z M4.200 11.600l4-2.500 4 2.500-4 2.600z"/></g><circle cx="12" cy="11.700" r="3.800" fill="#1fa83a" stroke="#0d6a20" stroke-width=".5"/><path d="M10 11.700l1.500 1.600 2.600-3.200" fill="none" stroke="#fff" stroke-width="1.300"/></svg>
<!-- speaker -->
<svg style="left:1569px;top:13px" width="16" height="16" viewBox="0 0 16 16"><path d="M1.500 5h3l4.500-4.500v14.500l-4.500-4.500h-3z" fill="#fff"/><path d="M11 4.500c1.500 2 1.500 5 0 7" fill="none" stroke="#ddd" stroke-width="1.100"/><path d="M13 3c2 3 2 7 0 10" fill="none" stroke="#9ab" stroke-width=".8" opacity=".6"/></svg>
<div class="t" style="left:1588px;width:80px;text-align:center;top:5px;font-size:12px;letter-spacing:-.3px;color:#fff">6:46 PM</div>
<div class="t" style="left:1588px;width:80px;text-align:center;top:22px;font-size:12px;letter-spacing:-.3px;color:#fff">18/11/2014</div>
<!-- show desktop -->
<div class="a" style="left:1666px;top:1px;width:15px;height:40px;box-sizing:border-box;border:1px solid rgba(10,25,45,.8);box-shadow:inset 0 0 0 1px rgba(190,215,240,.5);background:linear-gradient(135deg,rgba(150,185,220,.5),rgba(80,120,170,.35) 50%,rgba(110,150,195,.45))"></div>
</div>
</body></html>
